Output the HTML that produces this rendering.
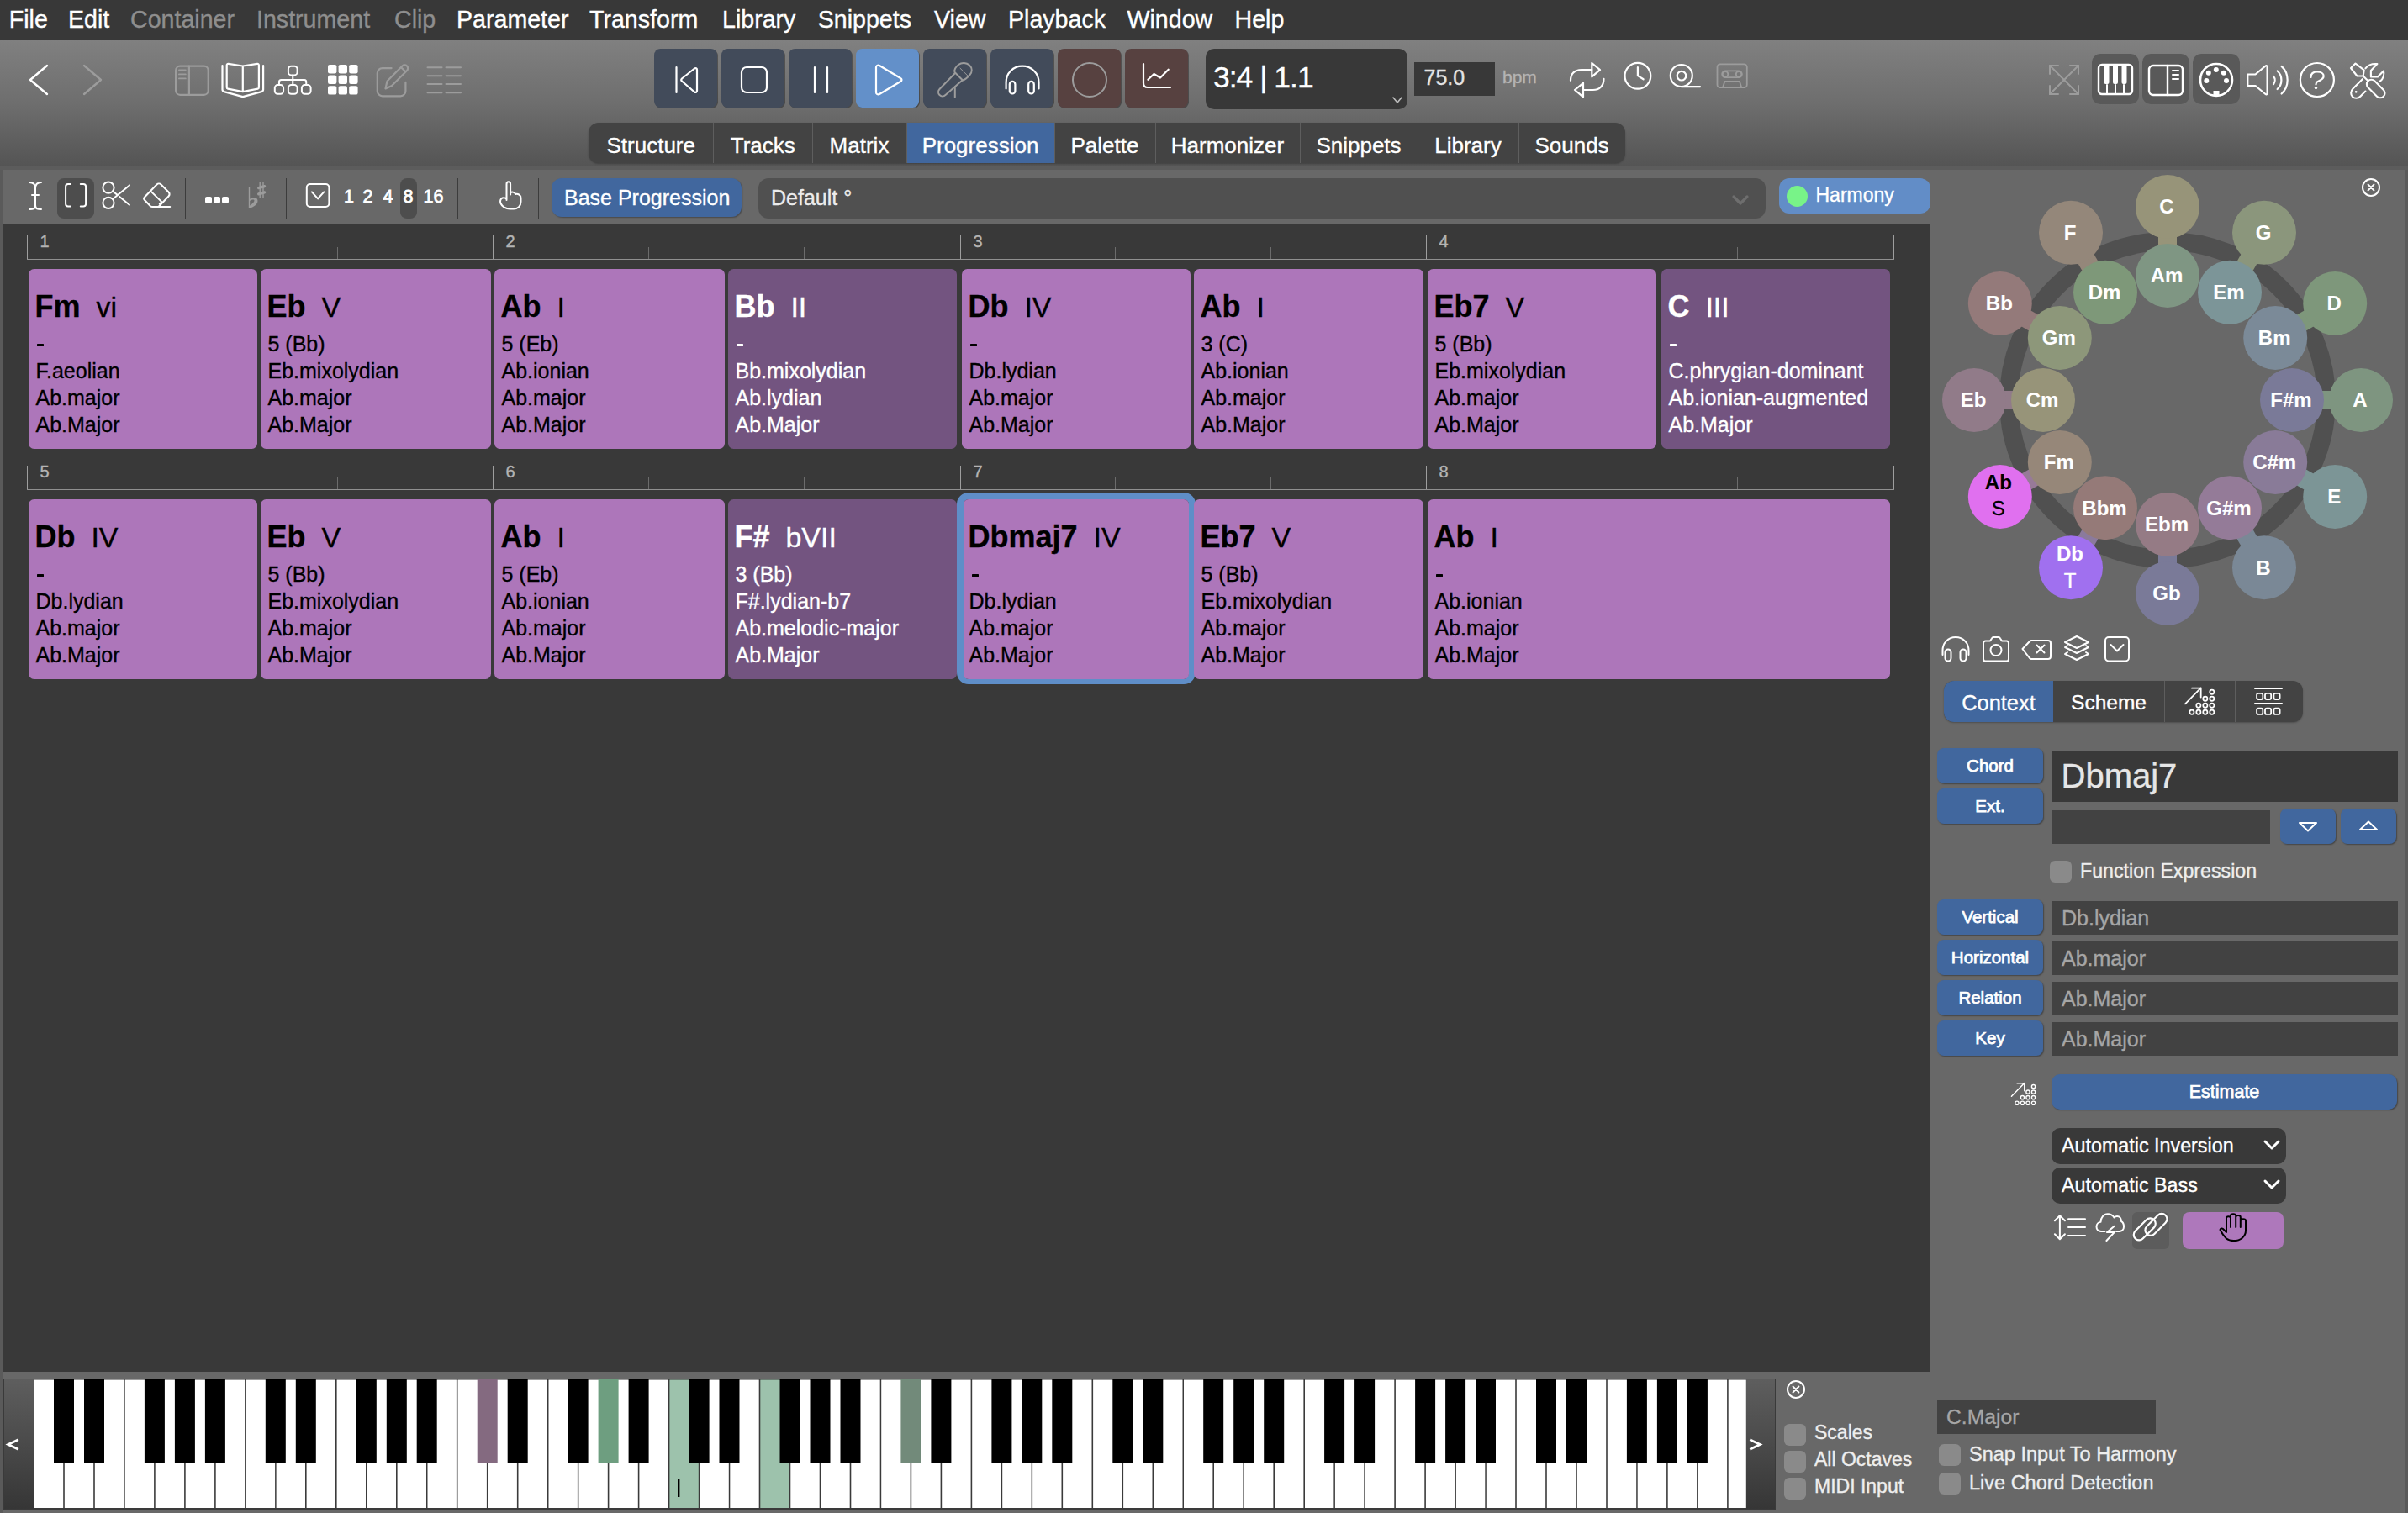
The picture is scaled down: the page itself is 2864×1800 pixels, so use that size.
<!DOCTYPE html><html><head><meta charset="utf-8"><style>
*{box-sizing:border-box;margin:0;padding:0}
html,body{width:2864px;height:1800px;overflow:hidden;background:#686868;font-family:"Liberation Sans",sans-serif}
.a{position:absolute}
.t{white-space:nowrap;-webkit-text-stroke:0.35px currentColor}
</style></head><body><div class="a" style="left:0px;top:0px;width:2864px;height:48px;background:#383838;border-radius:0px;"></div><div class="a t" style="left:10.8px;top:9.49px;font-size:28.6px;line-height:28.6px;color:#ffffff;font-weight:400;">File</div><div class="a t" style="left:81px;top:9.49px;font-size:28.6px;line-height:28.6px;color:#ffffff;font-weight:400;">Edit</div><div class="a t" style="left:155px;top:9.49px;font-size:28.6px;line-height:28.6px;color:#8e8e8e;font-weight:400;">Container</div><div class="a t" style="left:305px;top:9.49px;font-size:28.6px;line-height:28.6px;color:#8e8e8e;font-weight:400;">Instrument</div><div class="a t" style="left:469px;top:9.49px;font-size:28.6px;line-height:28.6px;color:#8e8e8e;font-weight:400;">Clip</div><div class="a t" style="left:543px;top:9.49px;font-size:28.6px;line-height:28.6px;color:#ffffff;font-weight:400;">Parameter</div><div class="a t" style="left:701px;top:9.49px;font-size:28.6px;line-height:28.6px;color:#ffffff;font-weight:400;">Transform</div><div class="a t" style="left:859px;top:9.49px;font-size:28.6px;line-height:28.6px;color:#ffffff;font-weight:400;">Library</div><div class="a t" style="left:972.7px;top:9.49px;font-size:28.6px;line-height:28.6px;color:#ffffff;font-weight:400;">Snippets</div><div class="a t" style="left:1111px;top:9.49px;font-size:28.6px;line-height:28.6px;color:#ffffff;font-weight:400;">View</div><div class="a t" style="left:1199px;top:9.49px;font-size:28.6px;line-height:28.6px;color:#ffffff;font-weight:400;">Playback</div><div class="a t" style="left:1340.5px;top:9.49px;font-size:28.6px;line-height:28.6px;color:#ffffff;font-weight:400;">Window</div><div class="a t" style="left:1468.5px;top:9.49px;font-size:28.6px;line-height:28.6px;color:#ffffff;font-weight:400;">Help</div><div class="a" style="left:0px;top:48px;width:2864px;height:150px;background:linear-gradient(#808080,#6e6e6e 50%,#545454);border-radius:0px;"></div><div class="a" style="left:0px;top:198px;width:2864px;height:4px;background:#5c5c5c;border-radius:0px;"></div><div class="a" style="left:0px;top:202px;width:2864px;height:64px;background:#686868;border-radius:0px;"></div><div class="a" style="left:0px;top:202px;width:4px;height:1598px;background:#5a5a5a;border-radius:0px;"></div><div class="a" style="left:2860px;top:202px;width:4px;height:1598px;background:#5a5a5a;border-radius:0px;"></div><div class="a" style="left:4px;top:266px;width:2292px;height:1366px;background:#393939;border-radius:0px;"></div><svg class="a" style="left:30px;top:72px;" width="34" height="46" viewBox="0 0 34 46" fill="none"><path d="M26 6 L6 23 L26 40" stroke="#ffffff" stroke-width="2.4" stroke-linecap="round" stroke-linejoin="round"/></svg><svg class="a" style="left:94px;top:72px;" width="34" height="46" viewBox="0 0 34 46" fill="none"><path d="M6 6 L26 23 L6 40" stroke="#9c9c9c" stroke-width="2.4" stroke-linecap="round" stroke-linejoin="round"/></svg><svg class="a" style="left:204px;top:74px;" width="48" height="42" viewBox="0 0 48 42" fill="none"><rect x="5.1" y="4.7" width="38.6" height="34.1" rx="5" stroke="#9c9c9c" stroke-width="2.2" stroke-linecap="round" stroke-linejoin="round"/><path d="M20.9 4.7 V38.8" stroke="#9c9c9c" stroke-width="2.2" stroke-linecap="round" stroke-linejoin="round"/><path d="M8.9 9.3 H16.8 M8.9 14.4 H16.8 M8.9 19.4 H16.8" stroke="#9c9c9c" stroke-width="1.8" stroke-linecap="round" stroke-linejoin="round"/></svg><svg class="a" style="left:260px;top:70px;" width="58" height="50" viewBox="0 0 58 50" fill="none"><path d="M28.8 8.5 L11.5 5.9 C10.5 5.8 9.7 6.5 9.7 7.5 V34 C9.7 34.8 10.3 35.5 11 35.7 L28.8 39.1 L46.6 35.7 C47.3 35.5 47.9 34.8 47.9 34 V7.5 C47.9 6.5 47.1 5.8 46.1 5.9 L28.8 8.5 V39.1" stroke="#ffffff" stroke-width="2.2" stroke-linecap="round" stroke-linejoin="round"/><path d="M4.5 8.1 V36.5 C4.5 38 5.5 38.8 6.5 39.1 L28.8 45.1 L51.1 39.1 C52.1 38.8 53.1 38 53.1 36.5 V8.1" stroke="#ffffff" stroke-width="2.2" stroke-linecap="round" stroke-linejoin="round"/></svg><svg class="a" style="left:322px;top:74px;" width="54" height="44" viewBox="0 0 54 44" fill="none"><rect x="20.9" y="4.7" width="10.7" height="10.7" rx="3.5" stroke="#ffffff" stroke-width="2" stroke-linecap="round" stroke-linejoin="round"/><rect x="4.8" y="27.1" width="10.3" height="10.7" rx="3.5" stroke="#ffffff" stroke-width="2" stroke-linecap="round" stroke-linejoin="round"/><rect x="20.9" y="27.1" width="10.7" height="10.7" rx="3.5" stroke="#ffffff" stroke-width="2" stroke-linecap="round" stroke-linejoin="round"/><rect x="36.9" y="27.1" width="10.7" height="10.7" rx="3.5" stroke="#ffffff" stroke-width="2" stroke-linecap="round" stroke-linejoin="round"/><path d="M26.25 15.4 V27.1 M9.95 27.1 V23.5 C9.95 22 11 20.9 12.5 20.9 H40 C41.5 20.9 42.25 22 42.25 23.5 V27.1" stroke="#ffffff" stroke-width="2" stroke-linecap="round" stroke-linejoin="round"/></svg><svg class="a" style="left:389.5px;top:77px;" width="37" height="37" viewBox="0 0 37 37" fill="none"><rect x="0.0" y="0.0" width="10.4" height="10.4" rx="2.2" fill="#fff"/><rect x="0.0" y="12.6" width="10.4" height="10.4" rx="2.2" fill="#fff"/><rect x="0.0" y="25.2" width="10.4" height="10.4" rx="2.2" fill="#fff"/><rect x="12.6" y="0.0" width="10.4" height="10.4" rx="2.2" fill="#fff"/><rect x="12.6" y="12.6" width="10.4" height="10.4" rx="2.2" fill="#fff"/><rect x="12.6" y="25.2" width="10.4" height="10.4" rx="2.2" fill="#fff"/><rect x="25.2" y="0.0" width="10.4" height="10.4" rx="2.2" fill="#fff"/><rect x="25.2" y="12.6" width="10.4" height="10.4" rx="2.2" fill="#fff"/><rect x="25.2" y="25.2" width="10.4" height="10.4" rx="2.2" fill="#fff"/></svg><svg class="a" style="left:444px;top:72px;" width="48" height="48" viewBox="0 0 48 48" fill="none"><path d="M21.6 9.1 H10.8 C7.5 9.1 4.8 11.8 4.8 15.1 V36.3 C4.8 39.6 7.5 42.3 10.8 42.3 H32.4 C35.7 42.3 38.4 39.6 38.4 36.3 V25.9" stroke="#9c9c9c" stroke-width="2.2" stroke-linecap="round" stroke-linejoin="round"/><path d="M14.5 33.4 L16.5 24.5 L34.5 6.5 C36 5 38.5 5 40 6.5 C41.5 8 41.5 10.5 40 12 L22 30 Z M33 8 L38.5 13.5" stroke="#9c9c9c" stroke-width="2.2" stroke-linecap="round" stroke-linejoin="round"/></svg><svg class="a" style="left:506px;top:77px;" width="46" height="36" viewBox="0 0 46 36" fill="none"><path d="M2.5 3.3 H19.5 M24.5 3.3 H42 M2.5 13.3 H19.5 M24.5 13.3 H42 M2.5 23.1 H19.5 M24.5 23.1 H42 M2.5 33.2 H19.5 M24.5 33.2 H42" stroke="#9c9c9c" stroke-width="2" stroke-linecap="round" stroke-linejoin="round"/></svg><div class="a" style="left:778px;top:58px;width:75px;height:70px;background:#424b5a;border-radius:7.5px;box-shadow:1px 1px 0 rgba(0,0,0,0.32);"></div><div class="a" style="left:858px;top:58px;width:75px;height:70px;background:#424b5a;border-radius:7.5px;box-shadow:1px 1px 0 rgba(0,0,0,0.32);"></div><div class="a" style="left:938px;top:58px;width:75px;height:70px;background:#424b5a;border-radius:7.5px;box-shadow:1px 1px 0 rgba(0,0,0,0.32);"></div><div class="a" style="left:1018px;top:58px;width:75px;height:70px;background:#6390c9;border-radius:7.5px;box-shadow:1px 1px 0 rgba(0,0,0,0.32);"></div><div class="a" style="left:1098px;top:58px;width:75px;height:70px;background:#424b5a;border-radius:7.5px;box-shadow:1px 1px 0 rgba(0,0,0,0.32);"></div><div class="a" style="left:1178px;top:58px;width:75px;height:70px;background:#424b5a;border-radius:7.5px;box-shadow:1px 1px 0 rgba(0,0,0,0.32);"></div><div class="a" style="left:1258px;top:58px;width:75px;height:70px;background:#574140;border-radius:7.5px;box-shadow:1px 1px 0 rgba(0,0,0,0.32);"></div><div class="a" style="left:1338px;top:58px;width:75px;height:70px;background:#574140;border-radius:7.5px;box-shadow:1px 1px 0 rgba(0,0,0,0.32);"></div><svg class="a" style="left:778px;top:58px;" width="75" height="70" viewBox="0 0 75 70" fill="none"><path d="M26.5 22 V52" stroke="#ffffff" stroke-width="2.2" stroke-linecap="round" stroke-linejoin="round"/><path d="M48 23.5 C49.5 22.5 51 23.5 51 25 V50 C51 51.5 49.5 52.5 48 51.5 L33 38.5 C32 37.5 32 36.5 33 35.5 Z" stroke="#ffffff" stroke-width="2.2" stroke-linecap="round" stroke-linejoin="round"/></svg><svg class="a" style="left:858px;top:58px;" width="75" height="70" viewBox="0 0 75 70" fill="none"><rect x="24" y="22" width="30" height="30" rx="6" stroke="#ffffff" stroke-width="2.2" stroke-linecap="round" stroke-linejoin="round"/></svg><svg class="a" style="left:938px;top:58px;" width="75" height="70" viewBox="0 0 75 70" fill="none"><path d="M31 22 V52 M46 22 V52" stroke="#ffffff" stroke-width="2.2" stroke-linecap="round" stroke-linejoin="round"/></svg><svg class="a" style="left:1018px;top:58px;" width="75" height="70" viewBox="0 0 75 70" fill="none"><path d="M24 22 C24 20 26 19 28 20 L53 35 C55 36 55 38 53 39 L28 54 C26 55 24 54 24 52 Z" stroke="#ffffff" stroke-width="2.2" stroke-linecap="round" stroke-linejoin="round"/></svg><svg class="a" style="left:1098px;top:58px;" width="75" height="70" viewBox="0 0 75 70" fill="none"><path d="M37.5 28 C36.5 25.5 38.5 21.5 42 19 C46 16 51.5 16.5 55 19.5 C58.5 23 58.5 27.5 55.5 31 C52.5 34.5 49.5 36.8 47 37.5 Z" stroke="#9c9c9c" stroke-width="2" stroke-linecap="round" stroke-linejoin="round"/><path d="M38 29 L19.5 48 C17.5 50 17.5 53 19.5 55 C21.5 57 24.5 57 26.5 55 L46.5 37.5" stroke="#9c9c9c" stroke-width="2" stroke-linecap="round" stroke-linejoin="round"/><path d="M37.8 45.6 V57.5" stroke="#9c9c9c" stroke-width="2" stroke-linecap="round" stroke-linejoin="round"/><path d="M43.7 22.9 L53 32.2" stroke="#9c9c9c" stroke-width="1"/></svg><svg class="a" style="left:1178px;top:58px;" width="75" height="70" viewBox="0 0 75 70" fill="none"><path d="M18.6 47.5 V40 C18.6 29 27 20.7 37.9 20.7 C48.8 20.7 57.5 29 57.5 40 V47.5" stroke="#ffffff" stroke-width="2.2" stroke-linecap="round" stroke-linejoin="round"/><rect x="22.8" y="38.9" width="6.6" height="14.6" rx="3.3" stroke="#ffffff" stroke-width="2.2" stroke-linecap="round" stroke-linejoin="round"/><rect x="45.2" y="38.9" width="6.6" height="14.6" rx="3.3" stroke="#ffffff" stroke-width="2.2" stroke-linecap="round" stroke-linejoin="round"/></svg><svg class="a" style="left:1258px;top:58px;" width="75" height="70" viewBox="0 0 75 70" fill="none"><circle cx="38" cy="37" r="20" stroke="#9c9c9c" stroke-width="2" stroke-linecap="round" stroke-linejoin="round"/></svg><svg class="a" style="left:1338px;top:58px;" width="75" height="70" viewBox="0 0 75 70" fill="none"><path d="M22 18 V41 C22 44 24 46 27 46 H54" stroke="#ffffff" stroke-width="2.2" stroke-linecap="round" stroke-linejoin="round"/><path d="M27.4 36.8 L34.5 30 L42 34.5 L51.7 24.7" stroke="#ffffff" stroke-width="2.2" stroke-linecap="round" stroke-linejoin="round"/></svg><div class="a" style="left:1434px;top:58px;width:240px;height:71.5px;background:#383838;border-radius:10px;"></div><div class="a t" style="left:1443px;top:75.45px;font-size:35.5px;line-height:35.5px;color:#ffffff;font-weight:400;letter-spacing:-1px;">3:4 | 1.1</div><svg class="a" style="left:1654px;top:112px;" width="16" height="14" viewBox="0 0 16 14" fill="none"><path d="M3 4 L8 10 L13 4" stroke="#bdbdbd" stroke-width="1.6" stroke-linecap="round" stroke-linejoin="round"/></svg><div class="a" style="left:1682px;top:74px;width:96px;height:39.5px;background:#383838;border-radius:0px;"></div><div class="a t" style="left:1693.5px;top:80.24px;font-size:25px;line-height:25px;color:#e4e4e4;font-weight:400;">75.0</div><div class="a t" style="left:1787px;top:80.72px;font-size:21px;line-height:21px;color:#b4b4b4;font-weight:400;">bpm</div><svg class="a" style="left:1864px;top:72px;" width="48" height="48" viewBox="0 0 48 48" fill="none"><path d="M4 23.8 C4 15.5 9 11.1 17 11.1 H29.3" stroke="#ffffff" stroke-width="2.2" stroke-linecap="round" stroke-linejoin="round"/><path d="M29.3 3 V19.4 L39 11.1 Z" stroke="#ffffff" stroke-width="2.2" stroke-linecap="round" stroke-linejoin="round"/><path d="M43.5 21.8 C43.5 30 38.5 35 30.5 35 H19" stroke="#ffffff" stroke-width="2.2" stroke-linecap="round" stroke-linejoin="round"/><path d="M19 26.8 V43.3 L9 35 Z" stroke="#ffffff" stroke-width="2.2" stroke-linecap="round" stroke-linejoin="round"/></svg><svg class="a" style="left:1928px;top:70px;" width="40" height="40" viewBox="0 0 40 40" fill="none"><circle cx="19.9" cy="20.3" r="15.4" stroke="#ffffff" stroke-width="2.2" stroke-linecap="round" stroke-linejoin="round"/><path d="M19.9 10.2 V20.1 L26.6 24.3" stroke="#ffffff" stroke-width="2.2" stroke-linecap="round" stroke-linejoin="round"/></svg><svg class="a" style="left:1982px;top:72px;" width="46" height="36" viewBox="0 0 46 36" fill="none"><circle cx="17.8" cy="18" r="13" stroke="#ffffff" stroke-width="2.2" stroke-linecap="round" stroke-linejoin="round"/><circle cx="18" cy="18.2" r="5.3" stroke="#ffffff" stroke-width="2.2" stroke-linecap="round" stroke-linejoin="round"/><path d="M17.8 31.2 H40" stroke="#ffffff" stroke-width="2.2" stroke-linecap="round" stroke-linejoin="round"/></svg><svg class="a" style="left:2038px;top:72px;" width="44" height="36" viewBox="0 0 44 36" fill="none"><rect x="4.5" y="4.3" width="35.3" height="27.9" rx="3.5" stroke="#9c9c9c" stroke-width="1.8" stroke-linecap="round" stroke-linejoin="round"/><rect x="10.2" y="12.4" width="23.6" height="7.8" rx="3.9" stroke="#9c9c9c" stroke-width="1.8" stroke-linecap="round" stroke-linejoin="round"/><circle cx="14" cy="16.3" r="3.3" stroke="#9c9c9c" stroke-width="1.8" stroke-linecap="round" stroke-linejoin="round"/><circle cx="30.1" cy="16.3" r="3.3" stroke="#9c9c9c" stroke-width="1.8" stroke-linecap="round" stroke-linejoin="round"/><path d="M11.2 31.5 L13.4 24.8 H31 L33.1 31.5" stroke="#9c9c9c" stroke-width="1.8" stroke-linecap="round" stroke-linejoin="round"/></svg><svg class="a" style="left:2432px;top:72px;" width="46" height="46" viewBox="0 0 46 46" fill="none"><path d="M6 6 L40 40 M40 6 L6 40" stroke="#9c9c9c" stroke-width="2" stroke-linecap="round" stroke-linejoin="round"/><path d="M6 16 V6 H16 M30 6 H40 V16 M40 30 V40 H30 M16 40 H6 V30" stroke="#9c9c9c" stroke-width="2" stroke-linecap="round" stroke-linejoin="round"/></svg><div class="a" style="left:2488px;top:64px;width:56px;height:60px;background:#595959;border-radius:10px;"></div><div class="a" style="left:2548px;top:64px;width:56px;height:60px;background:#595959;border-radius:10px;"></div><div class="a" style="left:2608px;top:64px;width:56px;height:60px;background:#595959;border-radius:10px;"></div><svg class="a" style="left:2488px;top:64px;" width="56" height="60" viewBox="0 0 56 60" fill="none"><rect x="8" y="13" width="40" height="35" rx="4" stroke="#ffffff" stroke-width="2.4" stroke-linecap="round" stroke-linejoin="round"/><path d="M18 48 V37 M28 48 V37 M38 48 V37" stroke="#ffffff" stroke-width="2" stroke-linecap="round" stroke-linejoin="round"/><rect x="14.5" y="13" width="6" height="23" rx="2" fill="#fff"/><rect x="25" y="13" width="6" height="23" rx="2" fill="#fff"/><rect x="35.5" y="13" width="6" height="23" rx="2" fill="#fff"/></svg><svg class="a" style="left:2548px;top:64px;" width="56" height="60" viewBox="0 0 56 60" fill="none"><rect x="8" y="14" width="40" height="35" rx="5" stroke="#ffffff" stroke-width="2.4" stroke-linecap="round" stroke-linejoin="round"/><path d="M30 14 V49" stroke="#ffffff" stroke-width="2.4" stroke-linecap="round" stroke-linejoin="round"/><path d="M36 20 H43 M36 25 H43 M36 30 H43" stroke="#ffffff" stroke-width="2" stroke-linecap="round" stroke-linejoin="round"/></svg><svg class="a" style="left:2608px;top:64px;" width="56" height="60" viewBox="0 0 56 60" fill="none"><circle cx="28" cy="31" r="19" stroke="#ffffff" stroke-width="2.6" stroke-linecap="round" stroke-linejoin="round"/><circle cx="16.3" cy="32.1" r="3" fill="#fff"/><circle cx="18.8" cy="22.8" r="3" fill="#fff"/><circle cx="27.8" cy="19" r="3" fill="#fff"/><circle cx="36.9" cy="22.8" r="3" fill="#fff"/><circle cx="40" cy="32.1" r="3" fill="#fff"/><rect x="24.5" y="44" width="7" height="6" fill="#fff"/></svg><svg class="a" style="left:2668px;top:72px;" width="58" height="46" viewBox="0 0 58 46" fill="none"><path d="M5.3 16.5 H14.5 L26.5 6.5 C27.5 5.7 28.6 6.2 28.6 7.5 V39 C28.6 40.3 27.5 40.8 26.5 40 L14.5 30 H5.3 Z" stroke="#ffffff" stroke-width="2.2" stroke-linecap="round" stroke-linejoin="round"/><path d="M36 18.8 C38.2 21.5 38.2 25.5 36 28.2" stroke="#ffffff" stroke-width="2.2" stroke-linecap="round" stroke-linejoin="round"/><path d="M40.6 12.5 C47 18 47 28.5 40.6 34" stroke="#ffffff" stroke-width="2.2" stroke-linecap="round" stroke-linejoin="round"/><path d="M45.6 6.9 C55 15.5 55 31 45.6 39.5" stroke="#ffffff" stroke-width="2.2" stroke-linecap="round" stroke-linejoin="round"/></svg><svg class="a" style="left:2733px;top:73px;" width="46" height="44" viewBox="0 0 46 44" fill="none"><circle cx="22.9" cy="22" r="20" stroke="#ffffff" stroke-width="2.2" stroke-linecap="round" stroke-linejoin="round"/><path d="M15.5 19 C15.5 14.5 18.5 12.4 23 12.4 C27.5 12.4 30.7 14.5 30.7 17.5 C30.7 21 27 22.5 23.5 24 C22 24.7 21.5 25.5 21.5 27.4" stroke="#ffffff" stroke-width="2.2" stroke-linecap="round" stroke-linejoin="round"/><circle cx="21.5" cy="31.5" r="1.7" fill="#fff"/></svg><svg class="a" style="left:2792px;top:71px;" width="48" height="48" viewBox="0 0 48 48" fill="none"><path d="M9.5 4.5 L4 10 L11.5 19.5 H18.7 L19.7 12.4 Z" stroke="#ffffff" stroke-width="2.1" stroke-linecap="round" stroke-linejoin="round"/><path d="M18.7 19.5 L24.5 25.3" stroke="#ffffff" stroke-width="2.1" stroke-linecap="round" stroke-linejoin="round"/><rect x="20.7" y="29" width="26" height="11" rx="5.5" transform="rotate(45 33.7 34.5)" stroke="#ffffff" stroke-width="2.1" stroke-linecap="round" stroke-linejoin="round"/><path d="M21.4 10.3 C24 7 28 5 33 5 H35.4 L27.9 13 V20.5 H36 L42.9 13.4 C44 17 43 23 38.4 26" stroke="#ffffff" stroke-width="2.1" stroke-linecap="round" stroke-linejoin="round"/><path d="M18 23 L6.5 34.5 C3.5 37.5 3.5 41.5 6 44 C8.5 46.5 12.5 46.5 15.5 43.5 L21.4 37.5" stroke="#ffffff" stroke-width="2.1" stroke-linecap="round" stroke-linejoin="round"/><circle cx="10.2" cy="38.3" r="1.4" fill="#fff"/></svg><div class="a" style="left:700px;top:146px;width:1233px;height:48px;background:#434343;border-radius:12px;box-shadow:0 1px 2px rgba(0,0,0,0.25);"></div><div class="a" style="left:1078px;top:146px;width:176px;height:48px;background:#41679e;border-radius:0px;"></div><div class="a t" style="left:774.25px;top:159.59px;font-size:26px;line-height:26px;color:#ffffff;font-weight:400;transform:translateX(-50%);">Structure</div><div class="a" style="left:848.0px;top:146px;width:1px;height:48px;background:#5e5e5e;border-radius:0px;"></div><div class="a t" style="left:907.25px;top:159.59px;font-size:26px;line-height:26px;color:#ffffff;font-weight:400;transform:translateX(-50%);">Tracks</div><div class="a" style="left:965.5px;top:146px;width:1px;height:48px;background:#5e5e5e;border-radius:0px;"></div><div class="a t" style="left:1022.0px;top:159.59px;font-size:26px;line-height:26px;color:#ffffff;font-weight:400;transform:translateX(-50%);">Matrix</div><div class="a" style="left:1077.5px;top:146px;width:1px;height:48px;background:#5e5e5e;border-radius:0px;"></div><div class="a t" style="left:1166.0px;top:159.59px;font-size:26px;line-height:26px;color:#ffffff;font-weight:400;transform:translateX(-50%);">Progression</div><div class="a" style="left:1253.5px;top:146px;width:1px;height:48px;background:#5e5e5e;border-radius:0px;"></div><div class="a t" style="left:1314.0px;top:159.59px;font-size:26px;line-height:26px;color:#ffffff;font-weight:400;transform:translateX(-50%);">Palette</div><div class="a" style="left:1373.5px;top:146px;width:1px;height:48px;background:#5e5e5e;border-radius:0px;"></div><div class="a t" style="left:1460.0px;top:159.59px;font-size:26px;line-height:26px;color:#ffffff;font-weight:400;transform:translateX(-50%);">Harmonizer</div><div class="a" style="left:1545.5px;top:146px;width:1px;height:48px;background:#5e5e5e;border-radius:0px;"></div><div class="a t" style="left:1616.0px;top:159.59px;font-size:26px;line-height:26px;color:#ffffff;font-weight:400;transform:translateX(-50%);">Snippets</div><div class="a" style="left:1685.5px;top:146px;width:1px;height:48px;background:#5e5e5e;border-radius:0px;"></div><div class="a t" style="left:1746.0px;top:159.59px;font-size:26px;line-height:26px;color:#ffffff;font-weight:400;transform:translateX(-50%);">Library</div><div class="a" style="left:1805.5px;top:146px;width:1px;height:48px;background:#5e5e5e;border-radius:0px;"></div><div class="a t" style="left:1869.5px;top:159.59px;font-size:26px;line-height:26px;color:#ffffff;font-weight:400;transform:translateX(-50%);">Sounds</div><svg class="a" style="left:30px;top:212px;" width="24" height="40" viewBox="0 0 24 40" fill="none"><path d="M5 5 C9 5 12 7 12 12 V32 C12 37 9 37 5 37 M19 5 C15 5 12 7 12 12 M12 32 C12 37 15 37 19 37 M8 20 H16" stroke="#ffffff" stroke-width="2" stroke-linecap="round" stroke-linejoin="round"/></svg><div class="a" style="left:68px;top:212px;width:44px;height:48px;background:#4d4d4d;border-radius:8px;"></div><svg class="a" style="left:68px;top:212px;" width="44" height="48" viewBox="0 0 44 48" fill="none"><path d="M16 7 H13 C11.4 7 10.1 8.3 10.1 10 V30.4 C10.1 32.1 11.4 33.4 13 33.4 H16 M27.8 7 H31.1 C32.8 7 34.1 8.3 34.1 10 V30.4 C34.1 32.1 32.8 33.4 31.1 33.4 H27.8" stroke="#ffffff" stroke-width="2" stroke-linecap="round" stroke-linejoin="round"/></svg><svg class="a" style="left:118px;top:212px;" width="40" height="40" viewBox="0 0 40 40" fill="none"><circle cx="11" cy="11.2" r="6.6" stroke="#ffffff" stroke-width="2" stroke-linecap="round" stroke-linejoin="round"/><circle cx="11" cy="29.3" r="6.6" stroke="#ffffff" stroke-width="2" stroke-linecap="round" stroke-linejoin="round"/><path d="M16.2 15.6 L21.8 20 M24.2 22 L36 31.7 M16.2 24.8 L36 8.4" stroke="#ffffff" stroke-width="2" stroke-linecap="round" stroke-linejoin="round"/></svg><svg class="a" style="left:166px;top:212px;" width="40" height="40" viewBox="0 0 40 40" fill="none"><path d="M22.5 34 L34.5 21.5 C36 20 36 18 34.5 16.5 L25.5 7.5 C24 6 22 6 20.5 7.5 L6 22.5 C5 23.5 5 25 6 26 L12 32.3 C12.8 33.4 13.8 34 15 34 H36.2" stroke="#ffffff" stroke-width="2" stroke-linecap="round" stroke-linejoin="round"/><path d="M13.7 15.9 L26.3 28.1 L23.8 30.6" stroke="#ffffff" stroke-width="2" stroke-linecap="round" stroke-linejoin="round"/></svg><div class="a" style="left:220px;top:212px;width:1.2px;height:48px;background:#3c3c3c;border-radius:0px;"></div><div class="a" style="left:244.0px;top:234.3px;width:8px;height:8px;background:#ffffff;border-radius:2px;"></div><div class="a" style="left:254.2px;top:234.3px;width:8px;height:8px;background:#ffffff;border-radius:2px;"></div><div class="a" style="left:264.4px;top:234.3px;width:8px;height:8px;background:#ffffff;border-radius:2px;"></div><svg class="a" style="left:292px;top:214px;" width="30" height="36" viewBox="0 0 30 36" fill="none"><path d="M4.5 9 V33.8" stroke="#9c9c9c" stroke-width="1.4"/><path d="M4.5 23 C9 20.5 14.5 20.5 14.5 25 C14.5 29 9.5 32.5 4.5 33.8 V31 C8 28.5 10.5 26.5 10.5 24.8 C10.5 23 7.5 23.2 4.5 25.5 Z" fill="#9c9c9c"/><path d="M17.2 3 V22 M21 2 V21" stroke="#9c9c9c" stroke-width="1.4"/><path d="M15.6 9.6 L22.6 7.6 M15.6 16.9 L22.6 14.9" stroke="#9c9c9c" stroke-width="3.2" stroke-linecap="round"/></svg><div class="a" style="left:340px;top:212px;width:1.2px;height:48px;background:#3c3c3c;border-radius:0px;"></div><svg class="a" style="left:360px;top:215px;" width="36" height="36" viewBox="0 0 36 36" fill="none"><rect x="4.8" y="4" width="26.6" height="26.9" rx="4" stroke="#ffffff" stroke-width="2" stroke-linecap="round" stroke-linejoin="round"/><path d="M10.9 13.4 L18.1 21.4 L25.3 13.4" stroke="#ffffff" stroke-width="2" stroke-linecap="round" stroke-linejoin="round"/></svg><div class="a" style="left:476px;top:212px;width:19.6px;height:48px;background:#4d4d4d;border-radius:8px;"></div><div class="a t" style="left:409px;top:223.60px;font-size:21.5px;line-height:21.5px;color:#ffffff;font-weight:400;-webkit-text-stroke:0.8px #fff;">1</div><div class="a t" style="left:431.5px;top:223.60px;font-size:21.5px;line-height:21.5px;color:#ffffff;font-weight:400;-webkit-text-stroke:0.8px #fff;">2</div><div class="a t" style="left:455.5px;top:223.60px;font-size:21.5px;line-height:21.5px;color:#ffffff;font-weight:400;-webkit-text-stroke:0.8px #fff;">4</div><div class="a t" style="left:479.5px;top:223.60px;font-size:21.5px;line-height:21.5px;color:#ffffff;font-weight:400;-webkit-text-stroke:0.8px #fff;">8</div><div class="a t" style="left:503.5px;top:223.60px;font-size:21.5px;line-height:21.5px;color:#ffffff;font-weight:400;-webkit-text-stroke:0.8px #fff;">16</div><div class="a" style="left:544px;top:212px;width:1.2px;height:48px;background:#3c3c3c;border-radius:0px;"></div><div class="a" style="left:568px;top:212px;width:1.2px;height:48px;background:#3c3c3c;border-radius:0px;"></div><svg class="a" style="left:590px;top:212px;" width="36" height="40" viewBox="0 0 36 40" fill="none"><path d="M12.5 26 V7 C12.5 5.3 13.5 4.3 14.8 4.3 C16.1 4.3 17.1 5.3 17.1 7 V19.5 M17.1 17.2 C19.5 15.8 22.5 17 23 19 M23 19 C26 18 29.5 20 29.5 23.5 V28 C29.5 33 26 36.5 21 36.5 H16.5 C11.5 36.5 7 33.5 5.5 30 C4.5 27.5 5 24.5 7.5 23.5 C9.5 22.8 11.5 23.5 12.5 25" stroke="#ffffff" stroke-width="2" stroke-linecap="round" stroke-linejoin="round"/></svg><div class="a" style="left:640px;top:212px;width:1.2px;height:48px;background:#3c3c3c;border-radius:0px;"></div><div class="a" style="left:656px;top:212px;width:226px;height:46.3px;background:#41679e;border-radius:12px;box-shadow:1px 1px 1.5px rgba(0,0,0,0.3);"></div><div class="a t" style="left:671px;top:222.54px;font-size:25px;line-height:25px;color:#ffffff;font-weight:400;">Base Progression</div><div class="a" style="left:902px;top:212px;width:1198px;height:48px;background:#505050;border-radius:12px;"></div><div class="a t" style="left:917px;top:222.84px;font-size:25px;line-height:25px;color:#ececec;font-weight:400;">Default &#176;</div><svg class="a" style="left:2058px;top:229px;" width="24" height="20" viewBox="0 0 24 20" fill="none"><path d="M4 5 L12 13 L20 5" stroke="#6e6e6e" stroke-width="3.2" stroke-linecap="round" stroke-linejoin="round"/></svg><div class="a" style="left:2116px;top:212px;width:180px;height:42px;background:#628dc7;border-radius:12px;"></div><div class="a" style="left:2124.6px;top:220.6px;width:25.8px;height:25.8px;border-radius:50%;background:#78f388"></div><div class="a t" style="left:2159.5px;top:220.53px;font-size:23px;line-height:23px;color:#ffffff;font-weight:400;">Harmony</div><div class="a" style="left:32px;top:308px;width:2221px;height:1px;background:#909090;border-radius:0px;"></div><div class="a" style="left:32px;top:280px;width:1px;height:28px;background:#9e9e9e;border-radius:0px;"></div><div class="a t" style="left:47.5px;top:277.37px;font-size:20px;line-height:20px;color:#b4b4b4;font-weight:400;">1</div><div class="a" style="left:216px;top:294px;width:1px;height:14px;background:#6c6c6c;border-radius:0px;"></div><div class="a" style="left:401px;top:294px;width:1px;height:14px;background:#6c6c6c;border-radius:0px;"></div><div class="a" style="left:586px;top:280px;width:1px;height:28px;background:#9e9e9e;border-radius:0px;"></div><div class="a t" style="left:601.5px;top:277.37px;font-size:20px;line-height:20px;color:#b4b4b4;font-weight:400;">2</div><div class="a" style="left:771px;top:294px;width:1px;height:14px;background:#6c6c6c;border-radius:0px;"></div><div class="a" style="left:956px;top:294px;width:1px;height:14px;background:#6c6c6c;border-radius:0px;"></div><div class="a" style="left:1142px;top:280px;width:1px;height:28px;background:#9e9e9e;border-radius:0px;"></div><div class="a t" style="left:1157.5px;top:277.37px;font-size:20px;line-height:20px;color:#b4b4b4;font-weight:400;">3</div><div class="a" style="left:1326px;top:294px;width:1px;height:14px;background:#6c6c6c;border-radius:0px;"></div><div class="a" style="left:1511px;top:294px;width:1px;height:14px;background:#6c6c6c;border-radius:0px;"></div><div class="a" style="left:1696px;top:280px;width:1px;height:28px;background:#9e9e9e;border-radius:0px;"></div><div class="a t" style="left:1711.5px;top:277.37px;font-size:20px;line-height:20px;color:#b4b4b4;font-weight:400;">4</div><div class="a" style="left:1881px;top:294px;width:1px;height:14px;background:#6c6c6c;border-radius:0px;"></div><div class="a" style="left:2066px;top:294px;width:1px;height:14px;background:#6c6c6c;border-radius:0px;"></div><div class="a" style="left:2252px;top:280px;width:1px;height:28px;background:#9e9e9e;border-radius:0px;"></div><div class="a" style="left:32px;top:582px;width:2221px;height:1px;background:#909090;border-radius:0px;"></div><div class="a" style="left:32px;top:554px;width:1px;height:28px;background:#9e9e9e;border-radius:0px;"></div><div class="a t" style="left:47.5px;top:551.37px;font-size:20px;line-height:20px;color:#b4b4b4;font-weight:400;">5</div><div class="a" style="left:216px;top:568px;width:1px;height:14px;background:#6c6c6c;border-radius:0px;"></div><div class="a" style="left:401px;top:568px;width:1px;height:14px;background:#6c6c6c;border-radius:0px;"></div><div class="a" style="left:586px;top:554px;width:1px;height:28px;background:#9e9e9e;border-radius:0px;"></div><div class="a t" style="left:601.5px;top:551.37px;font-size:20px;line-height:20px;color:#b4b4b4;font-weight:400;">6</div><div class="a" style="left:771px;top:568px;width:1px;height:14px;background:#6c6c6c;border-radius:0px;"></div><div class="a" style="left:956px;top:568px;width:1px;height:14px;background:#6c6c6c;border-radius:0px;"></div><div class="a" style="left:1142px;top:554px;width:1px;height:28px;background:#9e9e9e;border-radius:0px;"></div><div class="a t" style="left:1157.5px;top:551.37px;font-size:20px;line-height:20px;color:#b4b4b4;font-weight:400;">7</div><div class="a" style="left:1326px;top:568px;width:1px;height:14px;background:#6c6c6c;border-radius:0px;"></div><div class="a" style="left:1511px;top:568px;width:1px;height:14px;background:#6c6c6c;border-radius:0px;"></div><div class="a" style="left:1696px;top:554px;width:1px;height:28px;background:#9e9e9e;border-radius:0px;"></div><div class="a t" style="left:1711.5px;top:551.37px;font-size:20px;line-height:20px;color:#b4b4b4;font-weight:400;">8</div><div class="a" style="left:1881px;top:568px;width:1px;height:14px;background:#6c6c6c;border-radius:0px;"></div><div class="a" style="left:2066px;top:568px;width:1px;height:14px;background:#6c6c6c;border-radius:0px;"></div><div class="a" style="left:2252px;top:554px;width:1px;height:28px;background:#9e9e9e;border-radius:0px;"></div><div class="a" style="left:34px;top:320px;width:272px;height:214px;background:#ad76ba;border-radius:6.5px;"></div><div class="a t" style="left:41.5px;top:348.22px;font-size:34px;line-height:34px;color:#000000;font-weight:400;"><b style="font-size:36px">Fm</b>&nbsp;&nbsp;vi</div><div class="a" style="left:43.7px;top:409.1px;width:8.2px;height:2.6px;background:#000000;border-radius:0.5px;"></div><div class="a t" style="left:42.5px;top:428.54px;font-size:25px;line-height:25px;color:#000000;font-weight:400;">F.aeolian</div><div class="a t" style="left:42.5px;top:460.54px;font-size:25px;line-height:25px;color:#000000;font-weight:400;">Ab.major</div><div class="a t" style="left:42.5px;top:492.54px;font-size:25px;line-height:25px;color:#000000;font-weight:400;">Ab.Major</div><div class="a" style="left:310px;top:320px;width:274px;height:214px;background:#ad76ba;border-radius:6.5px;"></div><div class="a t" style="left:317.5px;top:348.22px;font-size:34px;line-height:34px;color:#000000;font-weight:400;"><b style="font-size:36px">Eb</b>&nbsp;&nbsp;V</div><div class="a t" style="left:318.5px;top:396.54px;font-size:25px;line-height:25px;color:#000000;font-weight:400;">5 (Bb)</div><div class="a t" style="left:318.5px;top:428.54px;font-size:25px;line-height:25px;color:#000000;font-weight:400;">Eb.mixolydian</div><div class="a t" style="left:318.5px;top:460.54px;font-size:25px;line-height:25px;color:#000000;font-weight:400;">Ab.major</div><div class="a t" style="left:318.5px;top:492.54px;font-size:25px;line-height:25px;color:#000000;font-weight:400;">Ab.Major</div><div class="a" style="left:588px;top:320px;width:274px;height:214px;background:#ad76ba;border-radius:6.5px;"></div><div class="a t" style="left:595.5px;top:348.22px;font-size:34px;line-height:34px;color:#000000;font-weight:400;"><b style="font-size:36px">Ab</b>&nbsp;&nbsp;I</div><div class="a t" style="left:596.5px;top:396.54px;font-size:25px;line-height:25px;color:#000000;font-weight:400;">5 (Eb)</div><div class="a t" style="left:596.5px;top:428.54px;font-size:25px;line-height:25px;color:#000000;font-weight:400;">Ab.ionian</div><div class="a t" style="left:596.5px;top:460.54px;font-size:25px;line-height:25px;color:#000000;font-weight:400;">Ab.major</div><div class="a t" style="left:596.5px;top:492.54px;font-size:25px;line-height:25px;color:#000000;font-weight:400;">Ab.Major</div><div class="a" style="left:866px;top:320px;width:272px;height:214px;background:#735480;border-radius:6.5px;"></div><div class="a t" style="left:873.5px;top:348.22px;font-size:34px;line-height:34px;color:#ffffff;font-weight:400;"><b style="font-size:36px">Bb</b>&nbsp;&nbsp;II</div><div class="a" style="left:875.7px;top:409.1px;width:8.2px;height:2.6px;background:#ffffff;border-radius:0.5px;"></div><div class="a t" style="left:874.5px;top:428.54px;font-size:25px;line-height:25px;color:#ffffff;font-weight:400;">Bb.mixolydian</div><div class="a t" style="left:874.5px;top:460.54px;font-size:25px;line-height:25px;color:#ffffff;font-weight:400;">Ab.lydian</div><div class="a t" style="left:874.5px;top:492.54px;font-size:25px;line-height:25px;color:#ffffff;font-weight:400;">Ab.Major</div><div class="a" style="left:1144px;top:320px;width:271.5px;height:214px;background:#ad76ba;border-radius:6.5px;"></div><div class="a t" style="left:1151.5px;top:348.22px;font-size:34px;line-height:34px;color:#000000;font-weight:400;"><b style="font-size:36px">Db</b>&nbsp;&nbsp;IV</div><div class="a" style="left:1153.7px;top:409.1px;width:8.2px;height:2.6px;background:#000000;border-radius:0.5px;"></div><div class="a t" style="left:1152.5px;top:428.54px;font-size:25px;line-height:25px;color:#000000;font-weight:400;">Db.lydian</div><div class="a t" style="left:1152.5px;top:460.54px;font-size:25px;line-height:25px;color:#000000;font-weight:400;">Ab.major</div><div class="a t" style="left:1152.5px;top:492.54px;font-size:25px;line-height:25px;color:#000000;font-weight:400;">Ab.Major</div><div class="a" style="left:1420px;top:320px;width:273px;height:214px;background:#ad76ba;border-radius:6.5px;"></div><div class="a t" style="left:1427.5px;top:348.22px;font-size:34px;line-height:34px;color:#000000;font-weight:400;"><b style="font-size:36px">Ab</b>&nbsp;&nbsp;I</div><div class="a t" style="left:1428.5px;top:396.54px;font-size:25px;line-height:25px;color:#000000;font-weight:400;">3 (C)</div><div class="a t" style="left:1428.5px;top:428.54px;font-size:25px;line-height:25px;color:#000000;font-weight:400;">Ab.ionian</div><div class="a t" style="left:1428.5px;top:460.54px;font-size:25px;line-height:25px;color:#000000;font-weight:400;">Ab.major</div><div class="a t" style="left:1428.5px;top:492.54px;font-size:25px;line-height:25px;color:#000000;font-weight:400;">Ab.Major</div><div class="a" style="left:1698px;top:320px;width:272px;height:214px;background:#ad76ba;border-radius:6.5px;"></div><div class="a t" style="left:1705.5px;top:348.22px;font-size:34px;line-height:34px;color:#000000;font-weight:400;"><b style="font-size:36px">Eb7</b>&nbsp;&nbsp;V</div><div class="a t" style="left:1706.5px;top:396.54px;font-size:25px;line-height:25px;color:#000000;font-weight:400;">5 (Bb)</div><div class="a t" style="left:1706.5px;top:428.54px;font-size:25px;line-height:25px;color:#000000;font-weight:400;">Eb.mixolydian</div><div class="a t" style="left:1706.5px;top:460.54px;font-size:25px;line-height:25px;color:#000000;font-weight:400;">Ab.major</div><div class="a t" style="left:1706.5px;top:492.54px;font-size:25px;line-height:25px;color:#000000;font-weight:400;">Ab.Major</div><div class="a" style="left:1976px;top:320px;width:272px;height:214px;background:#735480;border-radius:6.5px;"></div><div class="a t" style="left:1983.5px;top:348.22px;font-size:34px;line-height:34px;color:#ffffff;font-weight:400;"><b style="font-size:36px">C</b>&nbsp;&nbsp;III</div><div class="a" style="left:1985.7px;top:409.1px;width:8.2px;height:2.6px;background:#ffffff;border-radius:0.5px;"></div><div class="a t" style="left:1984.5px;top:428.54px;font-size:25px;line-height:25px;color:#ffffff;font-weight:400;">C.phrygian-dominant</div><div class="a t" style="left:1984.5px;top:460.54px;font-size:25px;line-height:25px;color:#ffffff;font-weight:400;">Ab.ionian-augmented</div><div class="a t" style="left:1984.5px;top:492.54px;font-size:25px;line-height:25px;color:#ffffff;font-weight:400;">Ab.Major</div><div class="a" style="left:34px;top:594px;width:272px;height:214px;background:#ad76ba;border-radius:6.5px;"></div><div class="a t" style="left:41.5px;top:622.22px;font-size:34px;line-height:34px;color:#000000;font-weight:400;"><b style="font-size:36px">Db</b>&nbsp;&nbsp;IV</div><div class="a" style="left:43.7px;top:683.1px;width:8.2px;height:2.6px;background:#000000;border-radius:0.5px;"></div><div class="a t" style="left:42.5px;top:702.54px;font-size:25px;line-height:25px;color:#000000;font-weight:400;">Db.lydian</div><div class="a t" style="left:42.5px;top:734.54px;font-size:25px;line-height:25px;color:#000000;font-weight:400;">Ab.major</div><div class="a t" style="left:42.5px;top:766.54px;font-size:25px;line-height:25px;color:#000000;font-weight:400;">Ab.Major</div><div class="a" style="left:310px;top:594px;width:274px;height:214px;background:#ad76ba;border-radius:6.5px;"></div><div class="a t" style="left:317.5px;top:622.22px;font-size:34px;line-height:34px;color:#000000;font-weight:400;"><b style="font-size:36px">Eb</b>&nbsp;&nbsp;V</div><div class="a t" style="left:318.5px;top:670.54px;font-size:25px;line-height:25px;color:#000000;font-weight:400;">5 (Bb)</div><div class="a t" style="left:318.5px;top:702.54px;font-size:25px;line-height:25px;color:#000000;font-weight:400;">Eb.mixolydian</div><div class="a t" style="left:318.5px;top:734.54px;font-size:25px;line-height:25px;color:#000000;font-weight:400;">Ab.major</div><div class="a t" style="left:318.5px;top:766.54px;font-size:25px;line-height:25px;color:#000000;font-weight:400;">Ab.Major</div><div class="a" style="left:588px;top:594px;width:274px;height:214px;background:#ad76ba;border-radius:6.5px;"></div><div class="a t" style="left:595.5px;top:622.22px;font-size:34px;line-height:34px;color:#000000;font-weight:400;"><b style="font-size:36px">Ab</b>&nbsp;&nbsp;I</div><div class="a t" style="left:596.5px;top:670.54px;font-size:25px;line-height:25px;color:#000000;font-weight:400;">5 (Eb)</div><div class="a t" style="left:596.5px;top:702.54px;font-size:25px;line-height:25px;color:#000000;font-weight:400;">Ab.ionian</div><div class="a t" style="left:596.5px;top:734.54px;font-size:25px;line-height:25px;color:#000000;font-weight:400;">Ab.major</div><div class="a t" style="left:596.5px;top:766.54px;font-size:25px;line-height:25px;color:#000000;font-weight:400;">Ab.Major</div><div class="a" style="left:866px;top:594px;width:272px;height:214px;background:#735480;border-radius:6.5px;"></div><div class="a t" style="left:873.5px;top:622.22px;font-size:34px;line-height:34px;color:#ffffff;font-weight:400;"><b style="font-size:36px">F#</b>&nbsp;&nbsp;bVII</div><div class="a t" style="left:874.5px;top:670.54px;font-size:25px;line-height:25px;color:#ffffff;font-weight:400;">3 (Bb)</div><div class="a t" style="left:874.5px;top:702.54px;font-size:25px;line-height:25px;color:#ffffff;font-weight:400;">F#.lydian-b7</div><div class="a t" style="left:874.5px;top:734.54px;font-size:25px;line-height:25px;color:#ffffff;font-weight:400;">Ab.melodic-major</div><div class="a t" style="left:874.5px;top:766.54px;font-size:25px;line-height:25px;color:#ffffff;font-weight:400;">Ab.Major</div><div class="a" style="left:1138px;top:586px;width:284px;height:228px;border:8px solid #5f8ec8;border-bottom-width:6px;border-radius:14px;"></div><div class="a" style="left:1146px;top:594px;width:268px;height:214px;background:#ad76ba;border-radius:6px;"></div><div class="a t" style="left:1151.5px;top:622.22px;font-size:34px;line-height:34px;color:#000000;font-weight:400;"><b style="font-size:36px">Dbmaj7</b>&nbsp;&nbsp;IV</div><div class="a" style="left:1155.7px;top:683.1px;width:8.2px;height:2.6px;background:#000000;border-radius:0.5px;"></div><div class="a t" style="left:1152.5px;top:702.54px;font-size:25px;line-height:25px;color:#000000;font-weight:400;">Db.lydian</div><div class="a t" style="left:1152.5px;top:734.54px;font-size:25px;line-height:25px;color:#000000;font-weight:400;">Ab.major</div><div class="a t" style="left:1152.5px;top:766.54px;font-size:25px;line-height:25px;color:#000000;font-weight:400;">Ab.Major</div><div class="a" style="left:1420px;top:594px;width:273px;height:214px;background:#ad76ba;border-radius:6.5px;"></div><div class="a t" style="left:1427.5px;top:622.22px;font-size:34px;line-height:34px;color:#000000;font-weight:400;"><b style="font-size:36px">Eb7</b>&nbsp;&nbsp;V</div><div class="a t" style="left:1428.5px;top:670.54px;font-size:25px;line-height:25px;color:#000000;font-weight:400;">5 (Bb)</div><div class="a t" style="left:1428.5px;top:702.54px;font-size:25px;line-height:25px;color:#000000;font-weight:400;">Eb.mixolydian</div><div class="a t" style="left:1428.5px;top:734.54px;font-size:25px;line-height:25px;color:#000000;font-weight:400;">Ab.major</div><div class="a t" style="left:1428.5px;top:766.54px;font-size:25px;line-height:25px;color:#000000;font-weight:400;">Ab.Major</div><div class="a" style="left:1698px;top:594px;width:550px;height:214px;background:#ad76ba;border-radius:6.5px;"></div><div class="a t" style="left:1705.5px;top:622.22px;font-size:34px;line-height:34px;color:#000000;font-weight:400;"><b style="font-size:36px">Ab</b>&nbsp;&nbsp;I</div><div class="a" style="left:1707.7px;top:683.1px;width:8.2px;height:2.6px;background:#000000;border-radius:0.5px;"></div><div class="a t" style="left:1706.5px;top:702.54px;font-size:25px;line-height:25px;color:#000000;font-weight:400;">Ab.ionian</div><div class="a t" style="left:1706.5px;top:734.54px;font-size:25px;line-height:25px;color:#000000;font-weight:400;">Ab.major</div><div class="a t" style="left:1706.5px;top:766.54px;font-size:25px;line-height:25px;color:#000000;font-weight:400;">Ab.Major</div><svg class="a" style="left:2808px;top:210.6px;" width="24" height="24" viewBox="0 0 24 24" fill="none"><circle cx="12" cy="12" r="10" stroke="#ffffff" stroke-width="2" stroke-linecap="round" stroke-linejoin="round"/><path d="M8.5 8.5 L15.5 15.5 M15.5 8.5 L8.5 15.5" stroke="#ffffff" stroke-width="1.8" stroke-linecap="round" stroke-linejoin="round"/></svg><svg class="a" style="left:0;top:0" width="2864" height="1800" viewBox="0 0 2864 1800"><circle cx="2578" cy="476" r="189" stroke="#505050" stroke-width="22" fill="none"/><line x1="2578.0" y1="246.0" x2="2578.0" y2="328.0" stroke="#979479" stroke-width="22"/><line x1="2693.0" y1="276.8" x2="2652.0" y2="347.8" stroke="#8b967c" stroke-width="22"/><line x1="2777.2" y1="361.0" x2="2706.2" y2="402.0" stroke="#7e977b" stroke-width="22"/><line x1="2808.0" y1="476.0" x2="2726.0" y2="476.0" stroke="#7e9580" stroke-width="22"/><line x1="2777.2" y1="591.0" x2="2706.2" y2="550.0" stroke="#7c9596" stroke-width="22"/><line x1="2693.0" y1="675.2" x2="2652.0" y2="604.2" stroke="#7a8896" stroke-width="22"/><line x1="2578.0" y1="706.0" x2="2578.0" y2="624.0" stroke="#7a7a98" stroke-width="22"/><line x1="2463.0" y1="675.2" x2="2504.0" y2="604.2" stroke="#8b7a9c" stroke-width="22"/><line x1="2378.8" y1="591.0" x2="2449.8" y2="550.0" stroke="#977a98" stroke-width="22"/><line x1="2348.0" y1="476.0" x2="2430.0" y2="476.0" stroke="#917b89" stroke-width="22"/><line x1="2378.8" y1="361.0" x2="2449.8" y2="402.0" stroke="#947a7a" stroke-width="22"/><line x1="2463.0" y1="276.8" x2="2504.0" y2="347.8" stroke="#94877a" stroke-width="22"/><circle cx="2578.0" cy="328.0" r="38" fill="#7f9683"/><circle cx="2652.0" cy="347.8" r="38" fill="#7c9598"/><circle cx="2706.2" cy="402.0" r="38" fill="#7b8a98"/><circle cx="2726.0" cy="476.0" r="38" fill="#7a7a98"/><circle cx="2706.2" cy="550.0" r="38" fill="#897b98"/><circle cx="2652.0" cy="604.2" r="38" fill="#947b98"/><circle cx="2578.0" cy="624.0" r="38" fill="#957b85"/><circle cx="2504.0" cy="604.2" r="38" fill="#957a78"/><circle cx="2449.8" cy="550.0" r="38" fill="#968779"/><circle cx="2430.0" cy="476.0" r="38" fill="#979479"/><circle cx="2449.8" cy="402.0" r="38" fill="#8d977a"/><circle cx="2504.0" cy="347.8" r="38" fill="#7e9879"/><circle cx="2578.0" cy="246.0" r="38" fill="#979479"/><circle cx="2693.0" cy="276.8" r="38" fill="#8b967c"/><circle cx="2777.2" cy="361.0" r="38" fill="#7e977b"/><circle cx="2808.0" cy="476.0" r="38" fill="#7e9580"/><circle cx="2777.2" cy="591.0" r="38" fill="#7c9596"/><circle cx="2693.0" cy="675.2" r="38" fill="#7a8896"/><circle cx="2578.0" cy="706.0" r="38" fill="#7a7a98"/><circle cx="2463.0" cy="675.2" r="38" fill="#a070ef"/><circle cx="2378.8" cy="591.0" r="38" fill="#e070ef"/><circle cx="2348.0" cy="476.0" r="38" fill="#917b89"/><circle cx="2378.8" cy="361.0" r="38" fill="#947a7a"/><circle cx="2463.0" cy="276.8" r="38" fill="#94877a"/></svg><div class="a t" style="left:2577.0px;top:316.38px;font-size:24px;line-height:24px;color:#ffffff;font-weight:700;-webkit-text-stroke:0.1px currentColor;transform:translateX(-50%);">Am</div><div class="a t" style="left:2651.0px;top:336.21px;font-size:24px;line-height:24px;color:#ffffff;font-weight:700;-webkit-text-stroke:0.1px currentColor;transform:translateX(-50%);">Em</div><div class="a t" style="left:2705.171759760097px;top:390.38px;font-size:24px;line-height:24px;color:#ffffff;font-weight:700;-webkit-text-stroke:0.1px currentColor;transform:translateX(-50%);">Bm</div><div class="a t" style="left:2725.0px;top:464.38px;font-size:24px;line-height:24px;color:#ffffff;font-weight:700;-webkit-text-stroke:0.1px currentColor;transform:translateX(-50%);">F#m</div><div class="a t" style="left:2705.171759760097px;top:538.38px;font-size:24px;line-height:24px;color:#ffffff;font-weight:700;-webkit-text-stroke:0.1px currentColor;transform:translateX(-50%);">C#m</div><div class="a t" style="left:2651.0px;top:592.56px;font-size:24px;line-height:24px;color:#ffffff;font-weight:700;-webkit-text-stroke:0.1px currentColor;transform:translateX(-50%);">G#m</div><div class="a t" style="left:2577.0px;top:612.38px;font-size:24px;line-height:24px;color:#ffffff;font-weight:700;-webkit-text-stroke:0.1px currentColor;transform:translateX(-50%);">Ebm</div><div class="a t" style="left:2503.0px;top:592.56px;font-size:24px;line-height:24px;color:#ffffff;font-weight:700;-webkit-text-stroke:0.1px currentColor;transform:translateX(-50%);">Bbm</div><div class="a t" style="left:2448.828240239903px;top:538.38px;font-size:24px;line-height:24px;color:#ffffff;font-weight:700;-webkit-text-stroke:0.1px currentColor;transform:translateX(-50%);">Fm</div><div class="a t" style="left:2429.0px;top:464.38px;font-size:24px;line-height:24px;color:#ffffff;font-weight:700;-webkit-text-stroke:0.1px currentColor;transform:translateX(-50%);">Cm</div><div class="a t" style="left:2448.828240239903px;top:390.38px;font-size:24px;line-height:24px;color:#ffffff;font-weight:700;-webkit-text-stroke:0.1px currentColor;transform:translateX(-50%);">Gm</div><div class="a t" style="left:2503.0px;top:336.21px;font-size:24px;line-height:24px;color:#ffffff;font-weight:700;-webkit-text-stroke:0.1px currentColor;transform:translateX(-50%);">Dm</div><div class="a t" style="left:2577.0px;top:234.38px;font-size:24px;line-height:24px;color:#ffffff;font-weight:700;-webkit-text-stroke:0.1px currentColor;transform:translateX(-50%);">C</div><div class="a t" style="left:2692.0px;top:265.20px;font-size:24px;line-height:24px;color:#ffffff;font-weight:700;-webkit-text-stroke:0.1px currentColor;transform:translateX(-50%);">G</div><div class="a t" style="left:2776.185842870421px;top:349.38px;font-size:24px;line-height:24px;color:#ffffff;font-weight:700;-webkit-text-stroke:0.1px currentColor;transform:translateX(-50%);">D</div><div class="a t" style="left:2807.0px;top:464.38px;font-size:24px;line-height:24px;color:#ffffff;font-weight:700;-webkit-text-stroke:0.1px currentColor;transform:translateX(-50%);">A</div><div class="a t" style="left:2776.185842870421px;top:579.38px;font-size:24px;line-height:24px;color:#ffffff;font-weight:700;-webkit-text-stroke:0.1px currentColor;transform:translateX(-50%);">E</div><div class="a t" style="left:2692.0px;top:663.57px;font-size:24px;line-height:24px;color:#ffffff;font-weight:700;-webkit-text-stroke:0.1px currentColor;transform:translateX(-50%);">B</div><div class="a t" style="left:2577.0px;top:694.38px;font-size:24px;line-height:24px;color:#ffffff;font-weight:700;-webkit-text-stroke:0.1px currentColor;transform:translateX(-50%);">Gb</div><div class="a t" style="left:2462.0px;top:646.87px;font-size:24px;line-height:24px;color:#ffffff;font-weight:700;-webkit-text-stroke:0.1px currentColor;transform:translateX(-50%);">Db</div><div class="a t" style="left:2462.0px;top:678.87px;font-size:24px;line-height:24px;color:#ffffff;font-weight:400;transform:translateX(-50%);">T</div><div class="a t" style="left:2376.814157129579px;top:561.68px;font-size:24px;line-height:24px;color:#000000;font-weight:700;-webkit-text-stroke:0.1px currentColor;transform:translateX(-50%);">Ab</div><div class="a t" style="left:2376.814157129579px;top:592.68px;font-size:24px;line-height:24px;color:#000000;font-weight:400;transform:translateX(-50%);">S</div><div class="a t" style="left:2347.0px;top:464.38px;font-size:24px;line-height:24px;color:#ffffff;font-weight:700;-webkit-text-stroke:0.1px currentColor;transform:translateX(-50%);">Eb</div><div class="a t" style="left:2377.814157129579px;top:349.38px;font-size:24px;line-height:24px;color:#ffffff;font-weight:700;-webkit-text-stroke:0.1px currentColor;transform:translateX(-50%);">Bb</div><div class="a t" style="left:2462.0px;top:265.20px;font-size:24px;line-height:24px;color:#ffffff;font-weight:700;-webkit-text-stroke:0.1px currentColor;transform:translateX(-50%);">F</div><svg class="a" style="left:2306px;top:754px;" width="40" height="36" viewBox="0 0 40 36" fill="none"><path d="M4.5 25 V20 C4.5 11 11 4 20 4 C29 4 35.5 11 35.5 20 V25" stroke="#ffffff" stroke-width="2" stroke-linecap="round" stroke-linejoin="round"/><rect x="7.5" y="18.5" width="7" height="14" rx="3.5" stroke="#ffffff" stroke-width="2" stroke-linecap="round" stroke-linejoin="round"/><rect x="25.5" y="18.5" width="7" height="14" rx="3.5" stroke="#ffffff" stroke-width="2" stroke-linecap="round" stroke-linejoin="round"/></svg><svg class="a" style="left:2355px;top:754px;" width="38" height="36" viewBox="0 0 38 36" fill="none"><path d="M4 11 C4 9.5 5 8.5 6.5 8.5 H12 L14 5.5 C14.5 4.5 15 4 16 4 H22 C23 4 23.5 4.5 24 5.5 L26 8.5 H31.5 C33 8.5 34 9.5 34 11 V30 C34 31.5 33 32.5 31.5 32.5 H6.5 C5 32.5 4 31.5 4 30 Z" stroke="#ffffff" stroke-width="2" stroke-linecap="round" stroke-linejoin="round"/><circle cx="19" cy="19.5" r="6.5" stroke="#ffffff" stroke-width="2" stroke-linecap="round" stroke-linejoin="round"/></svg><svg class="a" style="left:2402px;top:754px;" width="40" height="36" viewBox="0 0 40 36" fill="none"><path d="M3.5 18 L12 9 C12.5 8.5 13 8 14 8 H34 C36 8 37 9 37 11 V27 C37 29 36 30 34 30 H14 C13 30 12.5 29.5 12 29 Z" stroke="#ffffff" stroke-width="2" stroke-linecap="round" stroke-linejoin="round"/><path d="M20.5 13.5 L29.5 22.5 M29.5 13.5 L20.5 22.5" stroke="#ffffff" stroke-width="2" stroke-linecap="round" stroke-linejoin="round"/></svg><svg class="a" style="left:2451px;top:754px;" width="38" height="36" viewBox="0 0 38 36" fill="none"><path d="M19 3 L33 10 L19 17 L5 10 Z" stroke="#ffffff" stroke-width="2" stroke-linecap="round" stroke-linejoin="round"/><path d="M8 14 L5 16 L19 23 L33 16 L30 14" stroke="#ffffff" stroke-width="2" stroke-linecap="round" stroke-linejoin="round"/><path d="M8 22 L5 24 L19 31 L33 24 L30 22" stroke="#ffffff" stroke-width="2" stroke-linecap="round" stroke-linejoin="round"/></svg><svg class="a" style="left:2501px;top:754px;" width="34" height="36" viewBox="0 0 34 36" fill="none"><rect x="3" y="4" width="28" height="28.5" rx="4" stroke="#ffffff" stroke-width="2" stroke-linecap="round" stroke-linejoin="round"/><path d="M9.5 13 L17 20.5 L24.5 13" stroke="#ffffff" stroke-width="2" stroke-linecap="round" stroke-linejoin="round"/></svg><div class="a" style="left:2312px;top:810px;width:427px;height:49px;background:#434343;border-radius:12px;box-shadow:0 1px 2px rgba(0,0,0,0.25);"></div><div class="a" style="left:2312px;top:810px;width:130px;height:49px;background:#41679e;border-radius:12px 0 0 12px"></div><div class="a" style="left:2574px;top:810px;width:1px;height:49px;background:#5e5e5e;border-radius:0px;"></div><div class="a" style="left:2658px;top:810px;width:1px;height:49px;background:#5e5e5e;border-radius:0px;"></div><div class="a t" style="left:2377px;top:823.50px;font-size:25.4px;line-height:25.4px;color:#ffffff;font-weight:400;transform:translateX(-50%);">Context</div><div class="a t" style="left:2508px;top:824.26px;font-size:24.5px;line-height:24.5px;color:#ffffff;font-weight:400;transform:translateX(-50%);">Scheme</div><svg class="a" style="left:2596px;top:814px;" width="46" height="42" viewBox="0 0 46 42" fill="none"><circle cx="34.81" cy="9.30" r="2.60" stroke="#ffffff" stroke-width="1.7" stroke-linecap="round" stroke-linejoin="round"/><circle cx="26.84" cy="17.27" r="2.60" stroke="#ffffff" stroke-width="1.7" stroke-linecap="round" stroke-linejoin="round"/><circle cx="34.81" cy="17.27" r="2.60" stroke="#ffffff" stroke-width="1.7" stroke-linecap="round" stroke-linejoin="round"/><circle cx="18.87" cy="25.24" r="2.60" stroke="#ffffff" stroke-width="1.7" stroke-linecap="round" stroke-linejoin="round"/><circle cx="26.84" cy="25.24" r="2.60" stroke="#ffffff" stroke-width="1.7" stroke-linecap="round" stroke-linejoin="round"/><circle cx="34.81" cy="25.24" r="2.60" stroke="#ffffff" stroke-width="1.7" stroke-linecap="round" stroke-linejoin="round"/><circle cx="10.90" cy="33.21" r="2.60" stroke="#ffffff" stroke-width="1.7" stroke-linecap="round" stroke-linejoin="round"/><circle cx="18.87" cy="33.21" r="2.60" stroke="#ffffff" stroke-width="1.7" stroke-linecap="round" stroke-linejoin="round"/><circle cx="26.84" cy="33.21" r="2.60" stroke="#ffffff" stroke-width="1.7" stroke-linecap="round" stroke-linejoin="round"/><circle cx="34.81" cy="33.21" r="2.60" stroke="#ffffff" stroke-width="1.7" stroke-linecap="round" stroke-linejoin="round"/><path d="M3.00 23.40 L21.70 4.30 M11.00 4.70 H21.70 V15.50" stroke="#ffffff" stroke-width="1.8" stroke-linecap="round" stroke-linejoin="round"/></svg><svg class="a" style="left:2676px;top:814px;" width="48" height="40" viewBox="0 0 48 40" fill="none"><path d="M6 4.9 H38 M6 23 H38" stroke="#ffffff" stroke-width="2" stroke-linecap="round" stroke-linejoin="round"/><rect x="8.1" y="10.8" width="7.2" height="7.2" rx="2" stroke="#ffffff" stroke-width="1.8" stroke-linecap="round" stroke-linejoin="round"/><rect x="8.1" y="28.7" width="7.2" height="7.2" rx="2" stroke="#ffffff" stroke-width="1.8" stroke-linecap="round" stroke-linejoin="round"/><rect x="18" y="10.8" width="7.2" height="7.2" rx="2" stroke="#ffffff" stroke-width="1.8" stroke-linecap="round" stroke-linejoin="round"/><rect x="18" y="28.7" width="7.2" height="7.2" rx="2" stroke="#ffffff" stroke-width="1.8" stroke-linecap="round" stroke-linejoin="round"/><rect x="28.4" y="10.8" width="7.2" height="7.2" rx="2" stroke="#ffffff" stroke-width="1.8" stroke-linecap="round" stroke-linejoin="round"/><rect x="28.4" y="28.7" width="7.2" height="7.2" rx="2" stroke="#ffffff" stroke-width="1.8" stroke-linecap="round" stroke-linejoin="round"/></svg><div class="a" style="left:2304px;top:890px;width:126px;height:42px;background:#41679e;border-radius:8px;box-shadow:1px 1px 1.5px rgba(0,0,0,0.35);"></div><div class="a t" style="left:2367px;top:901.15px;font-size:20.5px;line-height:20.5px;color:#ffffff;font-weight:400;transform:translateX(-50%);-webkit-text-stroke:0.75px #fff;">Chord</div><div class="a" style="left:2304px;top:938px;width:126px;height:42px;background:#41679e;border-radius:8px;box-shadow:1px 1px 1.5px rgba(0,0,0,0.35);"></div><div class="a t" style="left:2367px;top:949.15px;font-size:20.5px;line-height:20.5px;color:#ffffff;font-weight:400;transform:translateX(-50%);-webkit-text-stroke:0.75px #fff;">Ext.</div><div class="a" style="left:2440px;top:894px;width:412px;height:60px;background:#393939;border-radius:0px;"></div><div class="a t" style="left:2451.5px;top:902.74px;font-size:40px;line-height:40px;color:#e6e6e6;font-weight:400;">Dbmaj7</div><div class="a" style="left:2440px;top:964px;width:260px;height:40px;background:#424242;border-radius:0px;"></div><div class="a" style="left:2712px;top:962px;width:66px;height:42px;background:#41679e;border-radius:8px;box-shadow:1px 1px 1.5px rgba(0,0,0,0.35);"></div><div class="a" style="left:2784px;top:962px;width:66px;height:42px;background:#41679e;border-radius:8px;box-shadow:1px 1px 1.5px rgba(0,0,0,0.35);"></div><svg class="a" style="left:2712px;top:962px;" width="66" height="42" viewBox="0 0 66 42" fill="none"><path d="M23 17 H43 L33 26.5 Z" stroke="#ffffff" stroke-width="2" stroke-linecap="round" stroke-linejoin="round"/></svg><svg class="a" style="left:2784px;top:962px;" width="66" height="42" viewBox="0 0 66 42" fill="none"><path d="M23 25 H43 L33 15.5 Z" stroke="#ffffff" stroke-width="2" stroke-linecap="round" stroke-linejoin="round"/></svg><div class="a" style="left:2438px;top:1024px;width:26px;height:26px;background:#8a8a8a;border-radius:6px;"></div><div class="a t" style="left:2474px;top:1025.36px;font-size:23.2px;line-height:23.2px;color:#eeeeee;font-weight:400;">Function Expression</div><div class="a" style="left:2304px;top:1070px;width:126px;height:42px;background:#41679e;border-radius:8px;box-shadow:1px 1px 1.5px rgba(0,0,0,0.35);"></div><div class="a t" style="left:2367px;top:1081.15px;font-size:20.5px;line-height:20.5px;color:#ffffff;font-weight:400;transform:translateX(-50%);-webkit-text-stroke:0.75px #fff;">Vertical</div><div class="a" style="left:2440px;top:1072px;width:412px;height:40px;background:#424242;border-radius:0px;"></div><div class="a t" style="left:2452px;top:1079.84px;font-size:25px;line-height:25px;color:#a6a6a6;font-weight:400;">Db.lydian</div><div class="a" style="left:2304px;top:1118px;width:126px;height:42px;background:#41679e;border-radius:8px;box-shadow:1px 1px 1.5px rgba(0,0,0,0.35);"></div><div class="a t" style="left:2367px;top:1129.15px;font-size:20.5px;line-height:20.5px;color:#ffffff;font-weight:400;transform:translateX(-50%);-webkit-text-stroke:0.75px #fff;">Horizontal</div><div class="a" style="left:2440px;top:1120px;width:412px;height:40px;background:#424242;border-radius:0px;"></div><div class="a t" style="left:2452px;top:1127.84px;font-size:25px;line-height:25px;color:#a6a6a6;font-weight:400;">Ab.major</div><div class="a" style="left:2304px;top:1166px;width:126px;height:42px;background:#41679e;border-radius:8px;box-shadow:1px 1px 1.5px rgba(0,0,0,0.35);"></div><div class="a t" style="left:2367px;top:1177.15px;font-size:20.5px;line-height:20.5px;color:#ffffff;font-weight:400;transform:translateX(-50%);-webkit-text-stroke:0.75px #fff;">Relation</div><div class="a" style="left:2440px;top:1168px;width:412px;height:40px;background:#424242;border-radius:0px;"></div><div class="a t" style="left:2452px;top:1175.84px;font-size:25px;line-height:25px;color:#a6a6a6;font-weight:400;">Ab.Major</div><div class="a" style="left:2304px;top:1214px;width:126px;height:42px;background:#41679e;border-radius:8px;box-shadow:1px 1px 1.5px rgba(0,0,0,0.35);"></div><div class="a t" style="left:2367px;top:1225.15px;font-size:20.5px;line-height:20.5px;color:#ffffff;font-weight:400;transform:translateX(-50%);-webkit-text-stroke:0.75px #fff;">Key</div><div class="a" style="left:2440px;top:1216px;width:412px;height:40px;background:#424242;border-radius:0px;"></div><div class="a t" style="left:2452px;top:1223.84px;font-size:25px;line-height:25px;color:#a6a6a6;font-weight:400;">Ab.Major</div><svg class="a" style="left:2389.5px;top:1284.5px;" width="38" height="34" viewBox="0 0 38 34" fill="none"><circle cx="28.54" cy="7.63" r="2.13" stroke="#ffffff" stroke-width="1.394" stroke-linecap="round" stroke-linejoin="round"/><circle cx="22.01" cy="14.16" r="2.13" stroke="#ffffff" stroke-width="1.394" stroke-linecap="round" stroke-linejoin="round"/><circle cx="28.54" cy="14.16" r="2.13" stroke="#ffffff" stroke-width="1.394" stroke-linecap="round" stroke-linejoin="round"/><circle cx="15.47" cy="20.70" r="2.13" stroke="#ffffff" stroke-width="1.394" stroke-linecap="round" stroke-linejoin="round"/><circle cx="22.01" cy="20.70" r="2.13" stroke="#ffffff" stroke-width="1.394" stroke-linecap="round" stroke-linejoin="round"/><circle cx="28.54" cy="20.70" r="2.13" stroke="#ffffff" stroke-width="1.394" stroke-linecap="round" stroke-linejoin="round"/><circle cx="8.94" cy="27.23" r="2.13" stroke="#ffffff" stroke-width="1.394" stroke-linecap="round" stroke-linejoin="round"/><circle cx="15.47" cy="27.23" r="2.13" stroke="#ffffff" stroke-width="1.394" stroke-linecap="round" stroke-linejoin="round"/><circle cx="22.01" cy="27.23" r="2.13" stroke="#ffffff" stroke-width="1.394" stroke-linecap="round" stroke-linejoin="round"/><circle cx="28.54" cy="27.23" r="2.13" stroke="#ffffff" stroke-width="1.394" stroke-linecap="round" stroke-linejoin="round"/><path d="M2.46 19.19 L17.79 3.53 M9.02 3.85 H17.79 V12.71" stroke="#ffffff" stroke-width="1.476" stroke-linecap="round" stroke-linejoin="round"/></svg><div class="a" style="left:2440px;top:1278px;width:411px;height:42px;background:#41679e;border-radius:10px;box-shadow:1px 1px 1.5px rgba(0,0,0,0.35);"></div><div class="a t" style="left:2645.5px;top:1288.80px;font-size:21.5px;line-height:21.5px;color:#ffffff;font-weight:400;transform:translateX(-50%);-webkit-text-stroke:0.75px #fff;">Estimate</div><div class="a" style="left:2440px;top:1342px;width:279px;height:43px;background:#393939;border-radius:10px;"></div><div class="a t" style="left:2452px;top:1352.28px;font-size:23.3px;line-height:23.3px;color:#ffffff;font-weight:400;">Automatic Inversion</div><svg class="a" style="left:2690px;top:1352px;" width="24" height="22" viewBox="0 0 24 22" fill="none"><path d="M4 6 L12 14 L20 6" stroke="#ffffff" stroke-width="3" stroke-linecap="round" stroke-linejoin="round"/></svg><div class="a" style="left:2440px;top:1389px;width:279px;height:43px;background:#393939;border-radius:10px;"></div><div class="a t" style="left:2452px;top:1399.28px;font-size:23.3px;line-height:23.3px;color:#ffffff;font-weight:400;">Automatic Bass</div><svg class="a" style="left:2690px;top:1399px;" width="24" height="22" viewBox="0 0 24 22" fill="none"><path d="M4 6 L12 14 L20 6" stroke="#ffffff" stroke-width="3" stroke-linecap="round" stroke-linejoin="round"/></svg><svg class="a" style="left:2440px;top:1440px;" width="44" height="40" viewBox="0 0 44 40" fill="none"><path d="M9.9 6.5 V34 M3.9 12.2 L9.9 6.2 L15.9 12.2 M3.9 28.2 L9.9 34.2 L15.9 28.2" stroke="#ffffff" stroke-width="2" stroke-linecap="round" stroke-linejoin="round"/><path d="M20 10.2 H40 M20 20.1 H40 M20 30.1 H40" stroke="#ffffff" stroke-width="2" stroke-linecap="round" stroke-linejoin="round"/></svg><svg class="a" style="left:2490px;top:1440px;" width="40" height="40" viewBox="0 0 40 40" fill="none"><path d="M13.5 24.9 H9 C5.5 24.9 3.5 22.5 3.5 19.5 C3.5 16.5 5.5 14 8.5 13.8 C8.5 8.5 12 4.3 17 4.3 C20.5 4.3 23 6 24.5 8.5 C25.5 7.5 26.5 7 28 7 C31 7 33 9.5 33 13 C35 14 36 16.5 36 19.5 C36 22.5 34 24.9 30.5 24.9 H27" stroke="#ffffff" stroke-width="2" stroke-linecap="round" stroke-linejoin="round"/><path d="M24.7 18.7 L16 26.1 H24.7 L15.4 36" stroke="#ffffff" stroke-width="2" stroke-linecap="round" stroke-linejoin="round"/></svg><div class="a" style="left:2536px;top:1442px;width:44px;height:44px;background:#5c5c5c;border-radius:6px;"></div><svg class="a" style="left:2536px;top:1442px;" width="44" height="44" viewBox="0 0 44 44" fill="none"><rect x="-1" y="14" width="31.5" height="12.8" rx="6.4" transform="rotate(-45 14.8 20.4)" stroke="#ffffff" stroke-width="2.2" stroke-linecap="round" stroke-linejoin="round"/><rect x="12.7" y="8.4" width="31.5" height="12.8" rx="6.4" transform="rotate(-45 28.5 14.8)" stroke="#ffffff" stroke-width="2.2" stroke-linecap="round" stroke-linejoin="round"/></svg><div class="a" style="left:2596px;top:1442px;width:120px;height:44px;background:#ae78bb;border-radius:8px;"></div><svg class="a" style="left:2636px;top:1440px;" width="40" height="40" viewBox="0 0 40 40" fill="none"><path d="M12 26 L8 22 C6.8 21 5 21.5 4.5 23 C6.5 27 9.5 31 12 33.5 C14.5 35.5 17 36.1 20.5 36.1 C29 36.1 35 31 35 24 V12.5 C35 11 34 10.3 32 10.3 C30 10.3 28.8 11 28.8 12.5 V19.9 M28.8 19.9 V8 C28.8 6.7 27.5 6 26 6 C24.5 6 23.2 6.7 23.2 8 V19.9 M23.2 19.9 V6 C23.2 4.9 22 4.3 20.1 4.3 C18.2 4.3 17 4.9 17 6 V19.9 M17 19.9 V9 C17 7.8 15.8 7.2 14.5 7.2 C13.2 7.2 12 7.8 12 9 V26" stroke="#000" stroke-width="2" stroke-linecap="round" stroke-linejoin="round"/></svg><div class="a" style="left:4px;top:1640px;width:2108px;height:156px;background:#3a3a3a;border-radius:0px;"></div><div class="a" style="left:5px;top:1641px;width:34.5px;height:154px;background:linear-gradient(#5e5e5e,#4a4a4a 50%,#363636)"></div><div class="a" style="left:2077px;top:1641px;width:34px;height:154px;background:linear-gradient(#5e5e5e,#4a4a4a 50%,#363636)"></div><svg class="a" style="left:0px;top:1700px;" width="30" height="40" viewBox="0 0 30 40" fill="none"><path d="M21.8 12.8 L9.8 18.5 L21.8 24.2" stroke="#fff" stroke-width="2.9" fill="none" stroke-linejoin="miter"/></svg><svg class="a" style="left:2070px;top:1700px;" width="30" height="40" viewBox="0 0 30 40" fill="none"><path d="M11.3 12.8 L23.3 18.5 L11.3 24.2" stroke="#fff" stroke-width="2.9" fill="none" stroke-linejoin="miter"/></svg><svg class="a" style="left:0;top:0" width="2864" height="1800" viewBox="0 0 2864 1800"><rect x="40.8" y="1641.5" width="34.4" height="152.5" fill="#ffffff"/><rect x="76.8" y="1641.5" width="34.4" height="152.5" fill="#ffffff"/><rect x="112.8" y="1641.5" width="34.4" height="152.5" fill="#ffffff"/><rect x="148.7" y="1641.5" width="34.4" height="152.5" fill="#ffffff"/><rect x="184.7" y="1641.5" width="34.4" height="152.5" fill="#ffffff"/><rect x="220.7" y="1641.5" width="34.4" height="152.5" fill="#ffffff"/><rect x="256.7" y="1641.5" width="34.4" height="152.5" fill="#ffffff"/><rect x="292.7" y="1641.5" width="34.4" height="152.5" fill="#ffffff"/><rect x="328.6" y="1641.5" width="34.4" height="152.5" fill="#ffffff"/><rect x="364.6" y="1641.5" width="34.4" height="152.5" fill="#ffffff"/><rect x="400.6" y="1641.5" width="34.4" height="152.5" fill="#ffffff"/><rect x="436.6" y="1641.5" width="34.4" height="152.5" fill="#ffffff"/><rect x="472.6" y="1641.5" width="34.4" height="152.5" fill="#ffffff"/><rect x="508.5" y="1641.5" width="34.4" height="152.5" fill="#ffffff"/><rect x="544.5" y="1641.5" width="34.4" height="152.5" fill="#ffffff"/><rect x="580.5" y="1641.5" width="34.4" height="152.5" fill="#ffffff"/><rect x="616.5" y="1641.5" width="34.4" height="152.5" fill="#ffffff"/><rect x="652.5" y="1641.5" width="34.4" height="152.5" fill="#ffffff"/><rect x="688.4" y="1641.5" width="34.4" height="152.5" fill="#ffffff"/><rect x="724.4" y="1641.5" width="34.4" height="152.5" fill="#ffffff"/><rect x="760.4" y="1641.5" width="34.4" height="152.5" fill="#ffffff"/><rect x="796.4" y="1641.5" width="34.4" height="152.5" fill="#9dc2ac"/><rect x="832.4" y="1641.5" width="34.4" height="152.5" fill="#ffffff"/><rect x="868.3" y="1641.5" width="34.4" height="152.5" fill="#ffffff"/><rect x="904.3" y="1641.5" width="34.4" height="152.5" fill="#9dc2ac"/><rect x="940.3" y="1641.5" width="34.4" height="152.5" fill="#ffffff"/><rect x="976.3" y="1641.5" width="34.4" height="152.5" fill="#ffffff"/><rect x="1012.3" y="1641.5" width="34.4" height="152.5" fill="#ffffff"/><rect x="1048.2" y="1641.5" width="34.4" height="152.5" fill="#ffffff"/><rect x="1084.2" y="1641.5" width="34.4" height="152.5" fill="#ffffff"/><rect x="1120.2" y="1641.5" width="34.4" height="152.5" fill="#ffffff"/><rect x="1156.2" y="1641.5" width="34.4" height="152.5" fill="#ffffff"/><rect x="1192.2" y="1641.5" width="34.4" height="152.5" fill="#ffffff"/><rect x="1228.1" y="1641.5" width="34.4" height="152.5" fill="#ffffff"/><rect x="1264.1" y="1641.5" width="34.4" height="152.5" fill="#ffffff"/><rect x="1300.1" y="1641.5" width="34.4" height="152.5" fill="#ffffff"/><rect x="1336.1" y="1641.5" width="34.4" height="152.5" fill="#ffffff"/><rect x="1372.1" y="1641.5" width="34.4" height="152.5" fill="#ffffff"/><rect x="1408.0" y="1641.5" width="34.4" height="152.5" fill="#ffffff"/><rect x="1444.0" y="1641.5" width="34.4" height="152.5" fill="#ffffff"/><rect x="1480.0" y="1641.5" width="34.4" height="152.5" fill="#ffffff"/><rect x="1516.0" y="1641.5" width="34.4" height="152.5" fill="#ffffff"/><rect x="1552.0" y="1641.5" width="34.4" height="152.5" fill="#ffffff"/><rect x="1587.9" y="1641.5" width="34.4" height="152.5" fill="#ffffff"/><rect x="1623.9" y="1641.5" width="34.4" height="152.5" fill="#ffffff"/><rect x="1659.9" y="1641.5" width="34.4" height="152.5" fill="#ffffff"/><rect x="1695.9" y="1641.5" width="34.4" height="152.5" fill="#ffffff"/><rect x="1731.9" y="1641.5" width="34.4" height="152.5" fill="#ffffff"/><rect x="1767.8" y="1641.5" width="34.4" height="152.5" fill="#ffffff"/><rect x="1803.8" y="1641.5" width="34.4" height="152.5" fill="#ffffff"/><rect x="1839.8" y="1641.5" width="34.4" height="152.5" fill="#ffffff"/><rect x="1875.8" y="1641.5" width="34.4" height="152.5" fill="#ffffff"/><rect x="1911.8" y="1641.5" width="34.4" height="152.5" fill="#ffffff"/><rect x="1947.7" y="1641.5" width="34.4" height="152.5" fill="#ffffff"/><rect x="1983.7" y="1641.5" width="34.4" height="152.5" fill="#ffffff"/><rect x="2019.7" y="1641.5" width="34.4" height="152.5" fill="#ffffff"/><rect x="2055.7" y="1641.5" width="21.1" height="152.5" fill="#ffffff"/><rect x="64.0" y="1640" width="24" height="100" fill="#000000"/><rect x="100.0" y="1640" width="24" height="100" fill="#000000"/><rect x="171.9" y="1640" width="24" height="100" fill="#000000"/><rect x="207.9" y="1640" width="24" height="100" fill="#000000"/><rect x="243.9" y="1640" width="24" height="100" fill="#000000"/><rect x="315.8" y="1640" width="24" height="100" fill="#000000"/><rect x="351.8" y="1640" width="24" height="100" fill="#000000"/><rect x="423.8" y="1640" width="24" height="100" fill="#000000"/><rect x="459.8" y="1640" width="24" height="100" fill="#000000"/><rect x="495.7" y="1640" width="24" height="100" fill="#000000"/><rect x="567.7" y="1640" width="24" height="100" fill="#846a80"/><rect x="603.7" y="1640" width="24" height="100" fill="#000000"/><rect x="675.6" y="1640" width="24" height="100" fill="#000000"/><rect x="711.6" y="1640" width="24" height="100" fill="#6e9e80"/><rect x="747.6" y="1640" width="24" height="100" fill="#000000"/><rect x="819.6" y="1640" width="24" height="100" fill="#000000"/><rect x="855.5" y="1640" width="24" height="100" fill="#000000"/><rect x="927.5" y="1640" width="24" height="100" fill="#000000"/><rect x="963.5" y="1640" width="24" height="100" fill="#000000"/><rect x="999.5" y="1640" width="24" height="100" fill="#000000"/><rect x="1071.4" y="1640" width="24" height="100" fill="#728a7a"/><rect x="1107.4" y="1640" width="24" height="100" fill="#000000"/><rect x="1179.4" y="1640" width="24" height="100" fill="#000000"/><rect x="1215.3" y="1640" width="24" height="100" fill="#000000"/><rect x="1251.3" y="1640" width="24" height="100" fill="#000000"/><rect x="1323.3" y="1640" width="24" height="100" fill="#000000"/><rect x="1359.3" y="1640" width="24" height="100" fill="#000000"/><rect x="1431.2" y="1640" width="24" height="100" fill="#000000"/><rect x="1467.2" y="1640" width="24" height="100" fill="#000000"/><rect x="1503.2" y="1640" width="24" height="100" fill="#000000"/><rect x="1575.1" y="1640" width="24" height="100" fill="#000000"/><rect x="1611.1" y="1640" width="24" height="100" fill="#000000"/><rect x="1683.1" y="1640" width="24" height="100" fill="#000000"/><rect x="1719.1" y="1640" width="24" height="100" fill="#000000"/><rect x="1755.0" y="1640" width="24" height="100" fill="#000000"/><rect x="1827.0" y="1640" width="24" height="100" fill="#000000"/><rect x="1863.0" y="1640" width="24" height="100" fill="#000000"/><rect x="1934.9" y="1640" width="24" height="100" fill="#000000"/><rect x="1970.9" y="1640" width="24" height="100" fill="#000000"/><rect x="2006.9" y="1640" width="24" height="100" fill="#000000"/><rect x="806" y="1759.5" width="2.4" height="21.5" fill="#000"/></svg><svg class="a" style="left:2124px;top:1641px;" width="24" height="24" viewBox="0 0 24 24" fill="none"><circle cx="12" cy="12" r="10" stroke="#ffffff" stroke-width="2" stroke-linecap="round" stroke-linejoin="round"/><path d="M8.5 8.5 L15.5 15.5 M15.5 8.5 L8.5 15.5" stroke="#ffffff" stroke-width="1.8" stroke-linecap="round" stroke-linejoin="round"/></svg><div class="a" style="left:2122px;top:1694px;width:26px;height:26px;background:#8a8a8a;border-radius:6px;"></div><div class="a t" style="left:2158px;top:1693.13px;font-size:23px;line-height:23px;color:#eeeeee;font-weight:400;">Scales</div><div class="a" style="left:2122px;top:1726px;width:26px;height:26px;background:#8a8a8a;border-radius:6px;"></div><div class="a t" style="left:2158px;top:1725.13px;font-size:23px;line-height:23px;color:#eeeeee;font-weight:400;">All Octaves</div><div class="a" style="left:2122px;top:1758px;width:26px;height:26px;background:#8a8a8a;border-radius:6px;"></div><div class="a t" style="left:2158px;top:1757.13px;font-size:23px;line-height:23px;color:#eeeeee;font-weight:400;">MIDI Input</div><div class="a" style="left:2304px;top:1666px;width:260px;height:39.5px;background:#424242;border-radius:0px;"></div><div class="a t" style="left:2315px;top:1674.09px;font-size:24.7px;line-height:24.7px;color:#a6a6a6;font-weight:400;">C.Major</div><div class="a" style="left:2306px;top:1718px;width:26px;height:26px;background:#8a8a8a;border-radius:6px;"></div><div class="a t" style="left:2342px;top:1719.11px;font-size:23.5px;line-height:23.5px;color:#eeeeee;font-weight:400;">Snap Input To Harmony</div><div class="a" style="left:2306px;top:1752px;width:26px;height:26px;background:#8a8a8a;border-radius:6px;"></div><div class="a t" style="left:2342px;top:1753.11px;font-size:23.5px;line-height:23.5px;color:#eeeeee;font-weight:400;">Live Chord Detection</div></body></html>
